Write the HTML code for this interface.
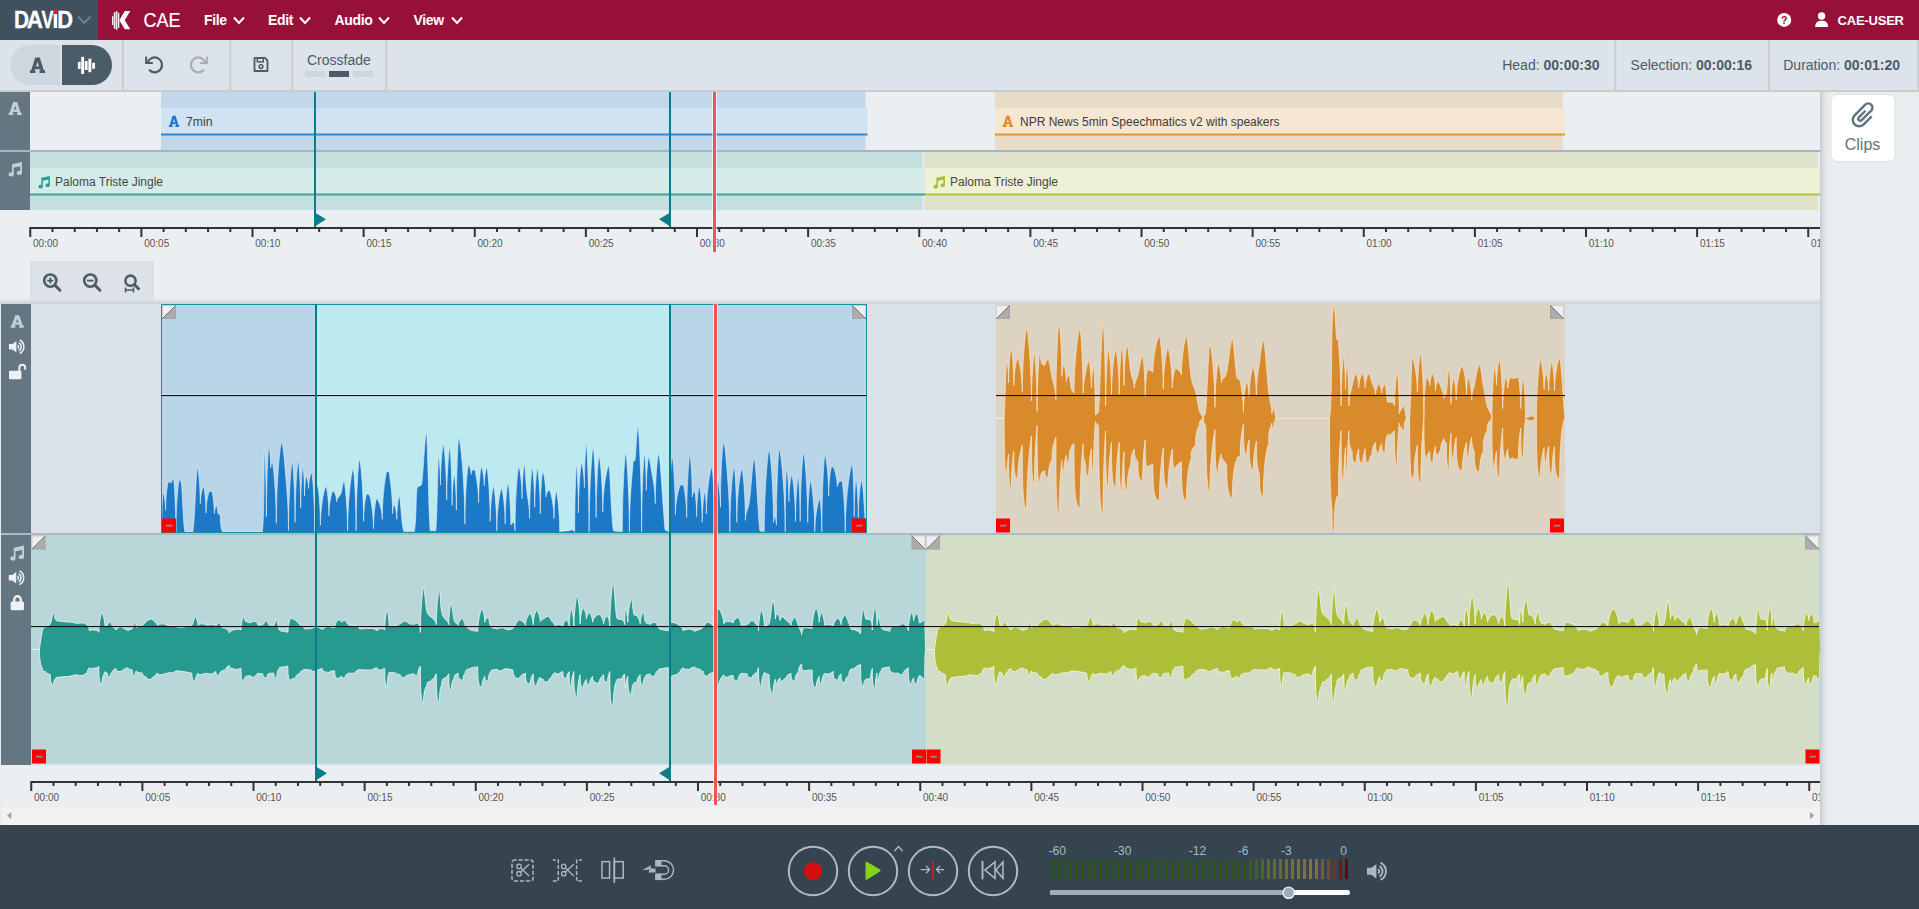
<!DOCTYPE html>
<html><head><meta charset="utf-8"><title>DAVID CAE</title>
<style>
html,body{margin:0;padding:0;width:1919px;height:909px;overflow:hidden;background:#eceff2;font-family:"Liberation Sans", sans-serif;}
#app{position:relative;width:1919px;height:909px;}
svg{display:block}
</style></head><body>
<div id="app"><div class="overview" style="position:absolute;left:0px;top:92px;width:1820px;height:212px;overflow:hidden"><svg width="1820" height="212" viewBox="0 92 1820 212"><rect x="0" y="92" width="1820" height="212" fill="#eceff2"/><rect x="0" y="92" width="30" height="118" fill="#647682"/><rect x="0" y="150" width="1820" height="2" fill="#a3b5c2"/><rect x="161" y="92" width="704.5" height="58" fill="#c2d7ea"/><rect x="161" y="108" width="706.5" height="26" fill="#d1e3f2"/><rect x="161" y="133.5" width="706.5" height="2" fill="#2f86d6"/><rect x="995" y="92" width="568" height="58" fill="#e8dcc8"/><rect x="995" y="108" width="570" height="26" fill="#f6e7d3"/><rect x="995" y="133.5" width="570" height="2" fill="#e0963a"/><rect x="30" y="152" width="892.5" height="58" fill="#c4dfde"/><rect x="30" y="168" width="892.5" height="26" fill="#d5ebe8"/><rect x="30" y="193.5" width="892.5" height="2" fill="#3ba59b"/><rect x="924.5" y="152" width="893.5" height="58" fill="#dfe3cb"/><rect x="924.5" y="168" width="895.5" height="26" fill="#eef1d6"/><rect x="924.5" y="193.5" width="895.5" height="2" fill="#b3c53e"/><rect x="922.5" y="152" width="2" height="58" fill="#e2e8ea"/><rect x="922" y="193.5" width="3" height="2" fill="#3ba59b"/><path transform="translate(8.6,102) scale(13.1,13)" d="M0.35,0 H0.65 L0.92,0.82 H1 V1 H0.64 V0.82 H0.71 L0.685,0.76 H0.315 L0.29,0.82 H0.36 V1 H0 V0.82 H0.08 Z M0.40,0.57 H0.60 L0.5,0.28 Z" fill="#c4ced5" fill-rule="evenodd"/><g transform="translate(8,162) scale(1.0)" fill="#c4ced5"><path d="M4,2.2 L14,0 V11 A2.6,2.1 0 1 1 12.2,9 V4.2 L5.8,5.6 V12.5 A2.6,2.1 0 1 1 4,10.5 Z"/></g><path transform="translate(168.9,115.8) scale(10.3,11.2)" d="M0.35,0 H0.65 L0.92,0.82 H1 V1 H0.64 V0.82 H0.71 L0.685,0.76 H0.315 L0.29,0.82 H0.36 V1 H0 V0.82 H0.08 Z M0.40,0.57 H0.60 L0.5,0.28 Z" fill="#1f7acb" fill-rule="evenodd"/><text x="186" y="125.9" font-family='"Liberation Sans", sans-serif' font-size="12.2" fill="#3c3c3c" font-weight="400" text-anchor="start" letter-spacing="0" >7min</text><path transform="translate(1002.7,115.8) scale(10.3,11.2)" d="M0.35,0 H0.65 L0.92,0.82 H1 V1 H0.64 V0.82 H0.71 L0.685,0.76 H0.315 L0.29,0.82 H0.36 V1 H0 V0.82 H0.08 Z M0.40,0.57 H0.60 L0.5,0.28 Z" fill="#e08c2c" fill-rule="evenodd"/><text x="1020" y="125.9" font-family='"Liberation Sans", sans-serif' font-size="12" fill="#3c3c3c" font-weight="400" text-anchor="start" letter-spacing="0" >NPR News 5min Speechmatics v2 with speakers</text><g transform="translate(38,176) scale(0.85)" fill="#2a9d92"><path d="M4,2.2 L14,0 V11 A2.6,2.1 0 1 1 12.2,9 V4.2 L5.8,5.6 V12.5 A2.6,2.1 0 1 1 4,10.5 Z"/></g><text x="55" y="186" font-family='"Liberation Sans", sans-serif' font-size="12" fill="#474747" font-weight="400" text-anchor="start" letter-spacing="0" >Paloma Triste Jingle</text><g transform="translate(933,176) scale(0.85)" fill="#a9bd2e"><path d="M4,2.2 L14,0 V11 A2.6,2.1 0 1 1 12.2,9 V4.2 L5.8,5.6 V12.5 A2.6,2.1 0 1 1 4,10.5 Z"/></g><text x="950" y="186" font-family='"Liberation Sans", sans-serif' font-size="12" fill="#474747" font-weight="400" text-anchor="start" letter-spacing="0" >Paloma Triste Jingle</text><rect x="30" y="227" width="1790" height="2" fill="#333"/><rect x="29.25" y="227" width="2" height="10" fill="#333"/><text x="33.05" y="247" font-family='"Liberation Sans", sans-serif' font-size="10" fill="#555" font-weight="400" text-anchor="start" letter-spacing="0" >00:00</text><rect x="51.48" y="227" width="2" height="5" fill="#333"/><rect x="73.70" y="227" width="2" height="5" fill="#333"/><rect x="95.93" y="227" width="2" height="5" fill="#333"/><rect x="118.15" y="227" width="2" height="5" fill="#333"/><rect x="140.38" y="227" width="2" height="10" fill="#333"/><text x="144.18" y="247" font-family='"Liberation Sans", sans-serif' font-size="10" fill="#555" font-weight="400" text-anchor="start" letter-spacing="0" >00:05</text><rect x="162.60" y="227" width="2" height="5" fill="#333"/><rect x="184.83" y="227" width="2" height="5" fill="#333"/><rect x="207.05" y="227" width="2" height="5" fill="#333"/><rect x="229.28" y="227" width="2" height="5" fill="#333"/><rect x="251.50" y="227" width="2" height="10" fill="#333"/><text x="255.3" y="247" font-family='"Liberation Sans", sans-serif' font-size="10" fill="#555" font-weight="400" text-anchor="start" letter-spacing="0" >00:10</text><rect x="273.73" y="227" width="2" height="5" fill="#333"/><rect x="295.95" y="227" width="2" height="5" fill="#333"/><rect x="318.18" y="227" width="2" height="5" fill="#333"/><rect x="340.40" y="227" width="2" height="5" fill="#333"/><rect x="362.62" y="227" width="2" height="10" fill="#333"/><text x="366.43" y="247" font-family='"Liberation Sans", sans-serif' font-size="10" fill="#555" font-weight="400" text-anchor="start" letter-spacing="0" >00:15</text><rect x="384.85" y="227" width="2" height="5" fill="#333"/><rect x="407.08" y="227" width="2" height="5" fill="#333"/><rect x="429.30" y="227" width="2" height="5" fill="#333"/><rect x="451.53" y="227" width="2" height="5" fill="#333"/><rect x="473.75" y="227" width="2" height="10" fill="#333"/><text x="477.55" y="247" font-family='"Liberation Sans", sans-serif' font-size="10" fill="#555" font-weight="400" text-anchor="start" letter-spacing="0" >00:20</text><rect x="495.98" y="227" width="2" height="5" fill="#333"/><rect x="518.20" y="227" width="2" height="5" fill="#333"/><rect x="540.42" y="227" width="2" height="5" fill="#333"/><rect x="562.65" y="227" width="2" height="5" fill="#333"/><rect x="584.88" y="227" width="2" height="10" fill="#333"/><text x="588.67" y="247" font-family='"Liberation Sans", sans-serif' font-size="10" fill="#555" font-weight="400" text-anchor="start" letter-spacing="0" >00:25</text><rect x="607.10" y="227" width="2" height="5" fill="#333"/><rect x="629.33" y="227" width="2" height="5" fill="#333"/><rect x="651.55" y="227" width="2" height="5" fill="#333"/><rect x="673.78" y="227" width="2" height="5" fill="#333"/><rect x="696.00" y="227" width="2" height="10" fill="#333"/><text x="699.8" y="247" font-family='"Liberation Sans", sans-serif' font-size="10" fill="#555" font-weight="400" text-anchor="start" letter-spacing="0" >00:30</text><rect x="718.23" y="227" width="2" height="5" fill="#333"/><rect x="740.45" y="227" width="2" height="5" fill="#333"/><rect x="762.68" y="227" width="2" height="5" fill="#333"/><rect x="784.90" y="227" width="2" height="5" fill="#333"/><rect x="807.12" y="227" width="2" height="10" fill="#333"/><text x="810.92" y="247" font-family='"Liberation Sans", sans-serif' font-size="10" fill="#555" font-weight="400" text-anchor="start" letter-spacing="0" >00:35</text><rect x="829.35" y="227" width="2" height="5" fill="#333"/><rect x="851.58" y="227" width="2" height="5" fill="#333"/><rect x="873.80" y="227" width="2" height="5" fill="#333"/><rect x="896.03" y="227" width="2" height="5" fill="#333"/><rect x="918.25" y="227" width="2" height="10" fill="#333"/><text x="922.05" y="247" font-family='"Liberation Sans", sans-serif' font-size="10" fill="#555" font-weight="400" text-anchor="start" letter-spacing="0" >00:40</text><rect x="940.48" y="227" width="2" height="5" fill="#333"/><rect x="962.70" y="227" width="2" height="5" fill="#333"/><rect x="984.93" y="227" width="2" height="5" fill="#333"/><rect x="1007.15" y="227" width="2" height="5" fill="#333"/><rect x="1029.38" y="227" width="2" height="10" fill="#333"/><text x="1033.17" y="247" font-family='"Liberation Sans", sans-serif' font-size="10" fill="#555" font-weight="400" text-anchor="start" letter-spacing="0" >00:45</text><rect x="1051.60" y="227" width="2" height="5" fill="#333"/><rect x="1073.83" y="227" width="2" height="5" fill="#333"/><rect x="1096.05" y="227" width="2" height="5" fill="#333"/><rect x="1118.28" y="227" width="2" height="5" fill="#333"/><rect x="1140.50" y="227" width="2" height="10" fill="#333"/><text x="1144.3" y="247" font-family='"Liberation Sans", sans-serif' font-size="10" fill="#555" font-weight="400" text-anchor="start" letter-spacing="0" >00:50</text><rect x="1162.73" y="227" width="2" height="5" fill="#333"/><rect x="1184.95" y="227" width="2" height="5" fill="#333"/><rect x="1207.18" y="227" width="2" height="5" fill="#333"/><rect x="1229.40" y="227" width="2" height="5" fill="#333"/><rect x="1251.62" y="227" width="2" height="10" fill="#333"/><text x="1255.42" y="247" font-family='"Liberation Sans", sans-serif' font-size="10" fill="#555" font-weight="400" text-anchor="start" letter-spacing="0" >00:55</text><rect x="1273.85" y="227" width="2" height="5" fill="#333"/><rect x="1296.08" y="227" width="2" height="5" fill="#333"/><rect x="1318.30" y="227" width="2" height="5" fill="#333"/><rect x="1340.53" y="227" width="2" height="5" fill="#333"/><rect x="1362.75" y="227" width="2" height="10" fill="#333"/><text x="1366.55" y="247" font-family='"Liberation Sans", sans-serif' font-size="10" fill="#555" font-weight="400" text-anchor="start" letter-spacing="0" >01:00</text><rect x="1384.98" y="227" width="2" height="5" fill="#333"/><rect x="1407.20" y="227" width="2" height="5" fill="#333"/><rect x="1429.43" y="227" width="2" height="5" fill="#333"/><rect x="1451.65" y="227" width="2" height="5" fill="#333"/><rect x="1473.88" y="227" width="2" height="10" fill="#333"/><text x="1477.67" y="247" font-family='"Liberation Sans", sans-serif' font-size="10" fill="#555" font-weight="400" text-anchor="start" letter-spacing="0" >01:05</text><rect x="1496.10" y="227" width="2" height="5" fill="#333"/><rect x="1518.33" y="227" width="2" height="5" fill="#333"/><rect x="1540.55" y="227" width="2" height="5" fill="#333"/><rect x="1562.78" y="227" width="2" height="5" fill="#333"/><rect x="1585.00" y="227" width="2" height="10" fill="#333"/><text x="1588.8" y="247" font-family='"Liberation Sans", sans-serif' font-size="10" fill="#555" font-weight="400" text-anchor="start" letter-spacing="0" >01:10</text><rect x="1607.23" y="227" width="2" height="5" fill="#333"/><rect x="1629.45" y="227" width="2" height="5" fill="#333"/><rect x="1651.68" y="227" width="2" height="5" fill="#333"/><rect x="1673.90" y="227" width="2" height="5" fill="#333"/><rect x="1696.12" y="227" width="2" height="10" fill="#333"/><text x="1699.92" y="247" font-family='"Liberation Sans", sans-serif' font-size="10" fill="#555" font-weight="400" text-anchor="start" letter-spacing="0" >01:15</text><rect x="1718.35" y="227" width="2" height="5" fill="#333"/><rect x="1740.58" y="227" width="2" height="5" fill="#333"/><rect x="1762.80" y="227" width="2" height="5" fill="#333"/><rect x="1785.03" y="227" width="2" height="5" fill="#333"/><rect x="1807.25" y="227" width="2" height="10" fill="#333"/><text x="1811.05" y="247" font-family='"Liberation Sans", sans-serif' font-size="10" fill="#555" font-weight="400" text-anchor="start" letter-spacing="0" >01:20</text><rect x="314" y="92" width="2" height="135" fill="#0b7d8a"/><polygon points="314,212 326,219.3 314,227" fill="#0b7d8a"/><rect x="669" y="92" width="2" height="135" fill="#0b7d8a"/><polygon points="671,212 659,219.3 671,227" fill="#0b7d8a"/><rect x="712" y="92" width="5" height="160" fill="rgba(255,255,255,0.62)"/><rect x="713" y="92" width="3" height="160" fill="#f05454"/><rect x="31" y="262" width="122" height="42" fill="#dce2e8" stroke="#d3d9df" stroke-width="1"/><circle cx="50.3" cy="280.6" r="6.1" fill="none" stroke="#4b5c69" stroke-width="2.6"/><line x1="54.875" y1="285.175" x2="59.937999999999995" y2="290.238" stroke="#4b5c69" stroke-width="3" stroke-linecap="round"/><path d="M47.3,280.6 H53.3 M50.3,277.6 V283.6" stroke="#4b5c69" stroke-width="1.8"/><circle cx="90.3" cy="280.6" r="6.1" fill="none" stroke="#4b5c69" stroke-width="2.6"/><line x1="94.875" y1="285.175" x2="99.938" y2="290.238" stroke="#4b5c69" stroke-width="3" stroke-linecap="round"/><path d="M87.0,280.6 H93.6" stroke="#4b5c69" stroke-width="1.8"/><circle cx="130.5" cy="280.7" r="5.1" fill="none" stroke="#4b5c69" stroke-width="2.6"/><line x1="134.325" y1="284.525" x2="138.558" y2="288.758" stroke="#4b5c69" stroke-width="3" stroke-linecap="round"/><path d="M125.5,287.5 V292.5 M125.5,290 H133.5 M133.5,287.5 V292.5" stroke="#4b5c69" stroke-width="1.6" fill="none"/><defs><linearGradient id="shT" x1="0" y1="0" x2="0" y2="1"><stop offset="0" stop-color="#eceff2" stop-opacity="0"/><stop offset="1" stop-color="#c9d0d6"/></linearGradient></defs><rect x="0" y="295" width="1820" height="9" fill="url(#shT)"/></svg></div><div class="tracks" style="position:absolute;left:0px;top:304px;width:1820px;height:521px;overflow:hidden"><svg width="1820" height="521" viewBox="0 304 1820 521"><rect x="0" y="304" width="1820" height="521" fill="#eceff2"/><rect x="31" y="304" width="1789" height="229" fill="#dae1e9"/><rect x="0" y="533" width="1820" height="2" fill="#a8bbc7"/><rect x="31" y="535" width="1789" height="229" fill="#b9d7d9"/><rect x="31" y="764" width="1789" height="1.5" fill="#dce2e7"/><rect x="1" y="304" width="30" height="229" fill="#647682"/><rect x="1" y="535" width="30" height="230" fill="#647682"/><rect x="161" y="304" width="706" height="229" fill="#b8d6e8"/><rect x="317" y="305" width="352" height="228" fill="#bdeaf0"/><defs><clipPath id="cpA"><rect x="161" y="304" width="706" height="228.3"/></clipPath><clipPath id="cpN"><rect x="996" y="304" width="569" height="229"/></clipPath><clipPath id="cpM"><rect x="31" y="535" width="1788" height="229"/></clipPath></defs><path clip-path="url(#cpA)" d="M161.5,533 L161.5,532 C161.7,525.4 162.4,492.2 162.8,492.2 C163.7,492.2 165.6,502 165.6,510.1 C165.6,497.4 167.6,481.9 168.4,481.9 C169.3,481.9 171.3,482.4 171.3,482.9 C171.3,481.2 172.8,479.1 173.5,479.1 C174.2,479.1 175.9,508.2 175.9,532 C175.9,508.6 178.3,480 179.3,480 C180,480 180.6,480 181.6,484.7 C182.5,493.4 183.1,524.1 185,532 C186.8,532 190.7,532 192.8,532 C194.9,521.3 196.1,467.8 197.5,467.8 C198.4,467.8 200.3,487.4 200.3,503.5 C200.3,495.9 202.6,486.6 203.5,486.6 C204.3,486.6 206,501.1 206,512.9 C206,503.6 207.8,495.8 208.8,492.2 C209.7,491.3 210.8,491.3 211.6,491.3 C212.4,491.3 214.4,503.7 214.4,513.8 C214.4,510 216,505.4 216.7,505.4 C217.1,505.4 217.6,512.2 218.2,513.8 C218.7,514.7 219.3,513.8 220,514.7 C220.8,517.8 220,529.1 222.9,532 C229.9,532 255.3,532 262.3,532 C264.5,518.3 263.8,450 264.5,450 C265.1,450 266.4,486.7 266.4,516.6 C266.4,485 268.1,446.3 268.8,446.3 C269.4,446.3 270.7,458.1 270.7,467.8 C270.7,465.3 271.7,462.2 272.2,462.2 C273.4,462.2 276.3,495.8 276.3,523.2 C276.3,486.9 280,442.5 281.6,442.5 C282.5,442.5 283.6,450.3 284.8,465 C285.9,479.7 288.5,501.1 288.5,530.7 C288.5,499.5 291.1,461.3 292.3,461.3 C293.1,461.3 295.1,494.8 295.1,522.3 C295.1,494.4 297.3,460.3 298.3,460.3 C299,460.3 300.7,486.7 300.7,508.2 C300.7,489.2 302.3,466 303,466 C303.4,466 304.5,482.5 304.5,496 C304.5,487.1 305.8,476.3 306.3,476.3 C307,476.3 308.6,483 308.6,488.5 C308.6,481.3 310.7,472.5 311.6,472.5 C312.6,472.5 314.8,505.2 314.8,532 C314.8,510.7 316.8,484.7 317.6,484.7 C318.4,484.7 320.4,506.9 320.4,525.1 C320.4,507.8 324.4,486.6 326,486.6 C326.9,486.6 328.9,502.6 328.9,515.7 C328.9,506.8 330.3,500.1 331.1,496 C331.9,491.9 332.8,491.3 333.5,491.3 C334.5,491.3 336.7,497 336.7,501.6 C336.7,497.8 339.9,496.6 341.1,493.2 C342.2,489.7 343,481 343.9,481 C345,481 347.6,508.3 347.6,530.7 C347.6,502.8 351.6,468.8 353.2,468.8 C354.1,468.8 356.1,502.8 356.1,530.7 C356.1,498.6 358.4,459.4 359.4,459.4 C360.7,459.4 363.6,493.5 363.6,521.3 C363.6,509.1 365.8,494.1 366.8,494.1 C367.8,494.1 369,494.1 370.1,496.9 C371.3,502.7 373.5,514.5 373.5,528.8 C373.5,515.3 375.7,498.8 376.7,498.8 C378.4,498.8 382.3,510.2 382.3,519.4 C382.3,497.9 385.6,471.6 387,471.6 C387.7,471.6 388.3,471.6 389.3,472.5 C390.2,479.6 392.6,495.2 392.6,513.8 C392.6,509.6 393.7,504.4 394.1,504.4 C394.9,504.4 396.8,512.7 396.8,519.4 C396.8,508.9 398.5,496 399.2,496 C400.6,496 401.4,525.7 403.9,531.6 C406.4,531.6 412,531.6 414.2,531.6 C416.4,524.4 415.8,496.5 417,488.5 C418.3,483.8 420.2,488.5 421.7,483.8 C423.3,474.4 425,432.2 426.4,432.2 C427.5,432.2 428.6,514.3 430.2,530.7 C431.7,530.7 434.4,530.7 435.8,530.7 C437.2,518.3 437.8,456.6 438.6,456.6 C439.2,456.6 440.5,472.1 440.5,484.7 C440.5,466.6 442.5,444.4 443.3,444.4 C444.3,444.4 446.7,474.8 446.7,499.7 C446.7,476.5 448.9,448.1 449.9,448.1 C450.5,448.1 452.1,479.6 452.1,505.4 C452.1,491.4 453.6,474.4 454.2,474.4 C454.9,474.4 456.4,494 456.4,510.1 C456.4,477.6 458,437.8 458.7,437.8 C460.5,437.8 464.9,485.3 464.9,524.1 C464.9,497.5 467.5,465 468.6,465 C469.4,465 471.1,470.2 471.1,474.4 C471.1,472.3 472.4,469.7 472.9,469.7 C473.6,469.7 474.3,469.7 475.2,470.7 C476.1,476.1 478.6,488.2 478.6,502.6 C478.6,486.5 480.5,466.9 481.4,466.9 C482.2,466.9 484.2,477.2 484.2,485.7 C484.2,477.6 486,467.8 486.8,467.8 C487.8,467.8 490.2,497.3 490.2,521.3 C490.2,505.7 492.6,486.6 493.6,486.6 C494.5,486.6 496.8,510.9 496.8,530.7 C496.8,511.7 500.1,488.5 501.5,488.5 C502.6,488.5 505.2,508.1 505.2,524.1 C505.2,505.6 507.2,482.9 508,482.9 C508.9,482.9 510.8,506.1 510.8,525.1 C510.8,523.8 512.8,522.3 513.7,522.3 C514.1,522.3 515,526.9 515,530.7 C515,502 517.6,466.9 518.8,466.9 C519.8,466.9 522.1,484.4 522.1,498.8 C522.1,483.6 523.7,465 524.4,465 C525.1,465 525.8,480.5 526.6,489.4 C527.5,498.3 529.6,505.4 529.6,518.5 C529.6,495.7 531.5,467.8 532.3,467.8 C533,467.8 534.7,489.5 534.7,507.2 C534.7,489.9 536.7,468.8 537.5,468.8 C538.4,468.8 540.3,493.5 540.3,513.8 C540.3,494.8 542,471.6 542.8,471.6 C543.7,471.6 546,485.5 546,496.9 C546,494 547.9,490.4 548.8,490.4 C549.4,490.4 550.1,490.4 551,494.1 C551.9,498.8 554,507.5 554,518.5 C554,506.3 555.6,491.3 556.3,491.3 C557.3,491.3 559.7,513.5 559.7,531.6 C559.7,531.2 567.5,531 569.4,530.7 C570.9,530.4 570.5,529.8 570.9,529.8 C572,529.8 574.7,530.8 574.7,531.6 C574.7,501.7 576,465 576.5,465 C577.1,465 578.4,491.3 578.4,512.9 C578.4,490.5 580.6,463.2 581.6,463.2 C582.4,463.2 584.4,476.6 584.4,487.5 C584.4,467.7 585.7,443.5 586.3,443.5 C587.1,443.5 589.1,492 589.1,531.6 C589.1,493.6 592,447.2 593.2,447.2 C594.1,447.2 596.1,485.9 596.1,517.6 C596.1,490.1 598.2,456.6 599.1,456.6 C600.2,456.6 602.8,487 602.8,511.9 C602.8,491.2 607,466 608.8,466 C610.2,466 611.2,519.7 613.5,530.7 C615.8,531.6 622.3,531.2 622.3,531.6 C622.3,496.2 624.7,452.8 625.7,452.8 C626.8,452.8 629.4,496.2 629.4,531.6 C629.4,500 632.3,473.2 633.2,461.3 C634.1,460.3 634.3,461.3 635.1,460.3 C635.9,454.6 637,426.6 637.9,426.6 C639,426.6 641.6,484.4 641.6,531.6 C641.6,496.6 643.6,453.8 644.5,453.8 C645,453.8 646.3,473.9 646.3,490.4 C646.3,475.6 647.9,457.5 648.6,457.5 C649.3,457.5 649.9,460.2 651,467.8 C652.1,475.5 655.3,487.4 655.3,503.5 C655.3,481.1 657.6,453.8 658.5,453.8 C660.5,453.8 663.4,516.8 665.1,529.8 C666.8,531.6 668.8,530.8 668.8,531.6 C668.8,497.9 671.2,456.6 672.2,456.6 C673.2,456.6 675.4,488.6 675.4,514.7 C675.4,501.2 679.4,484.7 681,484.7 C681.9,484.7 682.9,484.7 683.9,486.6 C684.8,492.1 686.7,503.6 686.7,517.6 C686.7,489.3 688.9,454.7 689.9,454.7 C690.6,454.7 692.3,477.9 692.3,496.9 C692.3,494.4 694,491.3 694.7,491.3 C695.3,491.3 696.6,505.2 696.6,516.6 C696.6,502.7 698.5,485.7 699.2,485.7 C700.1,485.7 702.2,505.8 702.2,522.3 C702.2,508.3 704.1,491.3 704.9,491.3 C705.3,491.3 706.4,503.7 706.4,513.8 C706.4,492.7 710.3,466.9 712,466.9 C712.8,466.9 714.8,502.5 714.8,531.6 C714.8,508.4 716.8,480 717.6,480 C718.5,480 720.4,495 720.4,507.2 C720.4,478.5 722.4,443.5 723.3,443.5 C723.9,443.5 724.4,443.5 725.5,451.9 C726.6,466.6 729.8,495.8 729.8,531.6 C729.8,502.5 732.8,466.9 734.1,466.9 C734.9,466.9 736.8,497.3 736.8,522.3 C736.8,498.2 740.4,468.8 742,468.8 C743,468.8 745.4,497.2 745.4,520.4 C745.4,511.5 748.1,511 749.5,500.7 C751,490.4 752.8,458.5 754.2,458.5 C755.9,458.5 758.2,518.5 759.8,530.7 C761.5,531.6 764.2,531.2 764.2,531.6 C764.2,494.9 767.7,450 769.2,450 C770.5,450 773.5,489.7 773.5,522.3 C773.5,519.7 774.5,516.6 774.8,516.6 C775.3,516.6 776.4,521.3 776.4,525.1 C776.4,490.9 778.3,449.1 779.2,449.1 C781,449.1 785.2,494.5 785.2,531.6 C785.2,502.9 786.1,467.8 786.5,467.8 C787.2,467.8 788.9,486.4 788.9,501.6 C788.9,489.8 790.9,475.3 791.7,475.3 C792.9,475.3 795.5,500.6 795.5,521.3 C795.5,501.1 797.5,476.3 798.3,476.3 C798.9,476.3 800.2,501.1 800.2,521.3 C800.2,490.5 802.5,452.8 803.6,452.8 C804.8,452.8 807.7,491 807.7,522.3 C807.7,503.7 809.7,481 810.5,481 C811.8,481 814.8,508.8 814.8,531.6 C814.8,516.9 818.4,498.8 819.9,498.8 C820.4,498.8 821.8,516.9 821.8,531.6 C821.8,497 824,454.7 824.9,454.7 C826.1,454.7 828.7,477.4 828.7,496 C828.7,482.9 830.8,466.9 831.7,466.9 C832.4,466.9 833,466.9 833.9,467.8 C834.9,471.1 837.3,478.2 837.3,486.6 C837.3,484.5 838.5,482.9 839.2,481.9 C840,481 841,481 841.8,481 C842.8,481 845.2,508.8 845.2,531.6 C845.2,501.2 850.2,464.1 852.3,464.1 C852.9,464.1 854.2,493 854.2,516.6 C854.2,499.7 855.5,479.1 856.1,479.1 C856.8,479.1 858.3,500.3 858.3,517.6 C858.3,500.7 860.7,480 861.7,480 C863,480 865.2,523 865.8,531.6 L865.8,533 Z" fill="#1c79c8" stroke="#e6f2f8" stroke-width="0.7" stroke-opacity="0.85"/><rect x="161.5" y="304.5" width="705" height="228" fill="none" stroke="#1592a0" stroke-width="1"/><rect x="996" y="304" width="569" height="229" fill="#ddd3c2"/><rect x="996" y="418" width="569" height="1" fill="#f6f1ea"/><path clip-path="url(#cpN)" d="M1004.2,418.4 C1004.7,408.6 1006,359.5 1006.8,359.5 C1007.4,359.5 1008.6,372.3 1008.6,382.8 C1008.6,367 1010.4,347.8 1011.2,347.8 C1012,347.8 1013.8,368.5 1013.8,385.3 C1013.8,373.1 1016.5,358.2 1017.7,358.2 C1019.1,358.2 1022.3,376.7 1022.3,391.8 C1022.3,363.1 1025.4,327.9 1026.7,327.9 C1028.1,327.9 1031.4,368 1031.4,400.9 C1031.4,379.3 1033.5,353 1034.5,353 C1035.3,353 1037.1,385 1037.1,411.2 C1037.1,385 1038.9,353 1039.7,353 C1040.3,353 1040.9,361.2 1041.7,363.4 C1042.6,365.5 1044.8,364.8 1044.8,365.9 C1044.8,363 1047.2,359.5 1048.2,359.5 C1049.3,359.5 1050.8,370.9 1052.1,377.6 C1053.4,384.3 1055.9,389.7 1055.9,399.6 C1055.9,364.6 1058.1,322 1059,322 C1059.9,322 1061.9,351.8 1061.9,376.3 C1061.9,371 1063.2,364.6 1063.7,364.6 C1064.5,364.6 1066.3,373.9 1066.3,381.5 C1066.3,378.5 1068.1,375 1068.9,375 C1069.6,375 1070.6,386.2 1071.5,389.2 C1072.3,392.2 1074,391.3 1074,393.1 C1074,364 1078.2,328.4 1080,328.4 C1080.9,328.4 1083.1,364 1083.1,393.1 C1083.1,383.8 1084.7,377.8 1085.7,372.4 C1086.6,367 1087.9,360.8 1088.8,360.8 C1089.6,360.8 1091.4,375.7 1091.4,387.9 C1091.4,378 1092.8,365.9 1093.4,365.9 C1094.1,365.9 1095.5,393 1095.5,415.1 C1095.5,413.3 1097.4,415.1 1098.6,411.2 C1099.9,395.7 1101.7,322 1103,322 C1103.8,322 1105.6,368.2 1105.6,406 C1105.6,380.4 1107.6,349.1 1108.4,349.1 C1109.4,349.1 1111.5,374 1111.5,394.4 C1111.5,374 1114.6,349.1 1115.9,349.1 C1116.9,349.1 1119.3,374 1119.3,394.4 C1119.3,372.3 1121.1,345.3 1121.9,345.3 C1122.5,345.3 1124,367.3 1124,385.3 C1124,367.3 1126.1,345.3 1127.1,345.3 C1128.2,345.3 1129.7,365.3 1130.9,372.4 C1132.1,379.5 1134.3,380.9 1134.3,387.9 C1134.3,382.1 1136.5,380.4 1137.9,375 C1139.3,369.6 1141.2,355.6 1142.6,355.6 C1143.3,355.6 1145.2,378.4 1145.2,397 C1145.2,384.8 1147,369.8 1147.7,369.8 C1149.3,369.8 1152.9,371.2 1152.9,372.4 C1152.9,356.1 1157.4,336.2 1159.4,336.2 C1160.5,336.2 1163.3,365.4 1163.3,389.2 C1163.3,370.6 1166.5,347.8 1167.9,347.8 C1169.2,347.8 1172.3,369.9 1172.3,387.9 C1172.3,379.2 1174.7,368.5 1175.7,368.5 C1177.4,368.5 1181.4,372.1 1181.4,375 C1181.4,357.5 1185,336.2 1186.5,336.2 C1187.9,336.2 1189.7,368.3 1191.2,377.6 C1192.7,386.8 1194.2,386.2 1195.6,391.8 C1197,397.4 1198.2,406.7 1199.5,411.2 C1200.8,415.7 1203.3,415.5 1203.3,419 C1203.3,414.3 1204.9,419 1205.9,408.6 C1207,396.1 1208.6,344 1209.8,344 C1211.4,344 1215,378.8 1215,407.3 C1215,387.5 1217.2,363.4 1218.1,363.4 C1219.1,363.4 1221.4,374 1221.4,382.8 C1221.4,378.1 1224.8,379.7 1226.6,372.4 C1228.4,365.1 1230.6,338.8 1232.3,338.8 C1233.7,338.8 1235.6,370.5 1237,377.6 C1238.3,381.5 1239.2,377.6 1240.3,381.5 C1241.4,387.3 1243.4,398.5 1243.4,412.5 C1243.4,398.5 1245.8,381.5 1246.8,381.5 C1247.5,381.5 1249.1,390 1249.1,397 C1249.1,383.6 1252,367.2 1253.3,367.2 C1254.2,367.2 1256.4,382.9 1256.4,395.7 C1256.4,380.6 1258.3,371.3 1259.5,362.1 C1260.6,352.8 1262.2,340.1 1263.3,340.1 C1265,340.1 1267.3,380.8 1268.8,393.1 C1270.2,405.4 1271.9,404.5 1271.9,413.8 C1271.9,411.5 1273.3,408.6 1273.9,408.6 C1274.5,408.6 1275.5,416.8 1275.8,418.4 C1275.7,418.4 1275.7,418.4 1275.7,418.4 C1284.6,418.4 1320.1,418.4 1329.5,418.4 C1332.1,403 1331.3,344.7 1332.1,325.9 C1332.8,307.1 1333.5,305.7 1334.1,305.7 C1334.9,305.7 1336,332.8 1336.7,338.8 C1337.5,341.4 1337.8,338.8 1338.5,341.4 C1339.3,352.6 1341.1,376.9 1341.1,406 C1341.1,383.3 1342.9,355.6 1343.7,355.6 C1344.2,355.6 1345.5,374.1 1345.5,389.2 C1345.5,377.6 1346.6,363.4 1347.1,363.4 C1347.6,363.4 1348.9,386.8 1348.9,406 C1348.9,396.7 1351,390.7 1352.2,385.3 C1353.4,380 1354.9,373.7 1356.1,373.7 C1356.9,373.7 1358.7,381.5 1358.7,387.9 C1358.7,381.5 1361.4,373.7 1362.6,373.7 C1363.4,373.7 1365.2,381.5 1365.2,387.9 C1365.2,381.5 1367.7,373.7 1368.8,373.7 C1369.8,373.7 1371,379.3 1372.1,382.8 C1373.3,386.2 1375.5,389.2 1375.5,394.4 C1375.5,389.7 1378,384 1379.1,384 C1379.9,384 1381.7,389 1381.7,393.1 C1381.7,389 1384.1,384 1385.1,384 C1385.9,384 1386.6,399.1 1387.7,402.1 C1388.7,402.1 1390.4,402.1 1391.5,402.1 C1392.7,402.8 1394.6,404.3 1394.6,406 C1394.6,390.3 1396.5,371.1 1397.2,371.1 C1397.9,371.1 1399.3,394.6 1399.3,413.8 C1399.3,411.5 1401.1,409.9 1401.9,408.6 C1402.7,407.3 1403.3,406 1404,406 C1404.7,406 1405.6,416.4 1406.5,418.4 C1407.5,418.4 1408.7,418.4 1409.6,418.4 C1410.6,408.2 1411.5,356.9 1412.2,356.9 C1412.8,356.9 1413.4,357.5 1414.3,363.4 C1415.2,369.2 1417.4,379 1417.4,391.8 C1417.4,374.3 1419.8,353 1420.8,353 C1421.7,353 1423.9,389 1423.9,418.4 C1423.9,400.1 1425.7,377.6 1426.5,377.6 C1427.5,377.6 1429.8,381.8 1429.8,385.3 C1429.8,380.1 1432,373.7 1432.9,373.7 C1433.7,373.7 1435.5,382.9 1435.5,390.5 C1435.5,386.4 1437.3,381.5 1438.1,381.5 C1438.9,381.5 1439.7,383.8 1440.7,386.6 C1441.6,389.4 1443.8,393 1443.8,398.3 C1443.8,395.9 1445.5,398.3 1446.4,393.1 C1447.2,387.9 1448.2,367.2 1449,367.2 C1449.6,367.2 1451,387.1 1451,403.4 C1451,391.8 1452.8,377.6 1453.6,377.6 C1454.4,377.6 1456.2,389.7 1456.2,399.6 C1456.2,384.4 1460.4,365.9 1462.1,365.9 C1463.5,365.9 1466.5,381.6 1466.5,394.4 C1466.5,386.8 1468,377.6 1468.6,377.6 C1469.5,377.6 1471.7,389.7 1471.7,399.6 C1471.7,393.2 1473,391.2 1474.3,385.3 C1475.6,379.5 1477.9,364.6 1479.5,364.6 C1480.6,364.6 1482.1,378.4 1483.3,385.3 C1484.6,392.2 1485.8,400.5 1487.2,406 C1488.6,411.5 1491.9,412.9 1491.9,418.4 C1491.9,395.4 1493.7,367.2 1494.5,367.2 C1495.1,367.2 1496.5,377.2 1496.5,385.3 C1496.5,373.7 1498.7,359.5 1499.6,359.5 C1500.6,359.5 1502.7,386.5 1502.7,408.6 C1502.7,394.6 1504.9,377.6 1505.8,377.6 C1506.5,377.6 1507.9,383.3 1507.9,387.9 C1507.9,383.3 1509.7,377.6 1510.5,377.6 C1511.3,377.6 1513.1,378.3 1513.1,378.9 C1513.1,378.3 1516.7,377.6 1518.3,377.6 C1519,377.6 1520.8,394.6 1520.8,408.6 C1520.8,394.6 1522.7,377.6 1523.4,377.6 C1524,377.6 1525.5,400.1 1525.5,418.4 C1525.5,417.7 1527.7,417.3 1528.6,416.9 C1529.5,416.5 1530.4,415.9 1531.2,415.9 C1532,415.9 1532.9,416.5 1533.8,416.9 C1534.6,417.3 1536.4,417.7 1536.4,418.4 C1536.4,391.9 1539.1,359.5 1540.2,359.5 C1541.4,359.5 1544.1,375.8 1544.1,389.2 C1544.1,382.2 1545.6,373.7 1546.2,373.7 C1547,373.7 1548.8,382.9 1548.8,390.5 C1548.8,377.7 1550.9,362.1 1551.9,362.1 C1552.6,362.1 1554.5,377.7 1554.5,390.5 C1554.5,376 1558.1,358.2 1559.6,358.2 C1561.2,358.2 1563.9,408.4 1564.8,418.4 L1564.8,418.4 C1559.6,428.4 1559.6,478.6 1559.6,478.6 C1554.5,478.6 1554.5,460.8 1554.5,446.3 C1551.9,459.1 1551.9,474.7 1551.9,474.7 C1548.8,474.7 1548.8,459.1 1548.8,446.3 C1546.2,453.9 1546.2,463.1 1546.2,463.1 C1544.1,463.1 1544.1,454.6 1544.1,447.6 C1540.2,461 1540.2,477.3 1540.2,477.3 C1536.4,477.3 1536.4,444.9 1536.4,418.4 C1533.8,419.1 1533.8,419.5 1533.8,419.9 C1531.2,420.3 1531.2,420.9 1531.2,420.9 C1528.6,420.9 1528.6,420.3 1528.6,419.9 C1525.5,419.5 1525.5,419.1 1525.5,418.4 C1523.4,436.7 1523.4,459.2 1523.4,459.2 C1520.8,459.2 1520.8,442.2 1520.8,428.2 C1518.3,442.2 1518.3,459.2 1518.3,459.2 C1513.1,459.2 1513.1,458.5 1513.1,457.9 C1510.5,458.5 1510.5,459.2 1510.5,459.2 C1507.9,459.2 1507.9,453.5 1507.9,448.9 C1505.8,453.5 1505.8,459.2 1505.8,459.2 C1502.7,459.2 1502.7,442.2 1502.7,428.2 C1499.6,450.3 1499.6,477.3 1499.6,477.3 C1496.5,477.3 1496.5,463.1 1496.5,451.5 C1494.5,459.6 1494.5,469.6 1494.5,469.6 C1491.9,469.6 1491.9,441.4 1491.9,418.4 C1487.2,423.9 1487.2,425.3 1487.2,430.8 C1483.3,436.3 1483.3,444.6 1483.3,451.5 C1479.5,458.4 1479.5,472.2 1479.5,472.2 C1474.3,472.2 1474.3,457.3 1474.3,451.5 C1471.7,445.6 1471.7,443.6 1471.7,437.2 C1468.6,447.1 1468.6,459.2 1468.6,459.2 C1466.5,459.2 1466.5,450 1466.5,442.4 C1462.1,455.2 1462.1,470.9 1462.1,470.9 C1456.2,470.9 1456.2,452.4 1456.2,437.2 C1453.6,447.1 1453.6,459.2 1453.6,459.2 C1451,459.2 1451,445 1451,433.4 C1449,449.7 1449,469.6 1449,469.6 C1446.4,469.6 1446.4,448.9 1446.4,443.7 C1443.8,438.5 1443.8,440.9 1443.8,438.5 C1440.7,443.8 1440.7,447.4 1440.7,450.2 C1438.1,453 1438.1,455.3 1438.1,455.3 C1435.5,455.3 1435.5,450.4 1435.5,446.3 C1432.9,453.9 1432.9,463.1 1432.9,463.1 C1429.8,463.1 1429.8,456.7 1429.8,451.5 C1426.5,455 1426.5,459.2 1426.5,459.2 C1423.9,459.2 1423.9,436.7 1423.9,418.4 C1420.8,447.8 1420.8,483.8 1420.8,483.8 C1417.4,483.8 1417.4,462.5 1417.4,445 C1414.3,457.8 1414.3,467.6 1414.3,473.4 C1412.2,479.3 1412.2,479.9 1412.2,479.9 C1409.6,479.9 1409.6,428.6 1409.6,418.4 C1406.5,418.4 1406.5,418.4 1406.5,418.4 C1404,420.4 1404,430.8 1404,430.8 C1401.9,430.8 1401.9,429.5 1401.9,428.2 C1399.3,426.9 1399.3,425.3 1399.3,423 C1397.2,442.2 1397.2,465.7 1397.2,465.7 C1394.6,465.7 1394.6,446.5 1394.6,430.8 C1391.5,432.5 1391.5,434 1391.5,434.7 C1387.7,434.7 1387.7,434.7 1387.7,434.7 C1385.1,437.7 1385.1,452.8 1385.1,452.8 C1381.7,452.8 1381.7,447.8 1381.7,443.7 C1379.1,447.8 1379.1,452.8 1379.1,452.8 C1375.5,452.8 1375.5,447.1 1375.5,442.4 C1372.1,447.6 1372.1,450.6 1372.1,454 C1368.8,457.5 1368.8,463.1 1368.8,463.1 C1365.2,463.1 1365.2,455.3 1365.2,448.9 C1362.6,455.3 1362.6,463.1 1362.6,463.1 C1358.7,463.1 1358.7,455.3 1358.7,448.9 C1356.1,455.3 1356.1,463.1 1356.1,463.1 C1352.2,463.1 1352.2,456.8 1352.2,451.5 C1348.9,446.1 1348.9,440.1 1348.9,430.8 C1347.1,450 1347.1,473.4 1347.1,473.4 C1345.5,473.4 1345.5,459.2 1345.5,447.6 C1343.7,462.7 1343.7,481.2 1343.7,481.2 C1341.1,481.2 1341.1,453.5 1341.1,430.8 C1338.5,459.9 1338.5,484.2 1338.5,495.4 C1336.7,498 1336.7,495.4 1336.7,498 C1334.1,504 1334.1,531.1 1334.1,531.1 C1332.1,531.1 1332.1,529.7 1332.1,510.9 C1329.5,492.1 1329.5,433.8 1329.5,418.4 C1275.7,418.4 1275.7,418.4 1275.7,418.4 C1275.7,418.4 1275.8,418.4 1275.8,418.4 C1273.9,420 1273.9,428.2 1273.9,428.2 C1271.9,428.2 1271.9,425.3 1271.9,423 C1268.8,432.3 1268.8,431.4 1268.8,443.7 C1263.3,456 1263.3,496.7 1263.3,496.7 C1259.5,496.7 1259.5,484 1259.5,474.7 C1256.4,465.5 1256.4,456.2 1256.4,441.1 C1253.3,453.9 1253.3,469.6 1253.3,469.6 C1249.1,469.6 1249.1,453.2 1249.1,439.8 C1246.8,446.8 1246.8,455.3 1246.8,455.3 C1243.4,455.3 1243.4,438.3 1243.4,424.3 C1240.3,438.3 1240.3,449.5 1240.3,455.3 C1237,459.2 1237,455.3 1237,459.2 C1232.3,466.3 1232.3,498 1232.3,498 C1226.6,498 1226.6,471.7 1226.6,464.4 C1221.4,457.1 1221.4,458.7 1221.4,454 C1218.1,462.8 1218.1,473.4 1218.1,473.4 C1215,473.4 1215,449.3 1215,429.5 C1209.8,458 1209.8,492.8 1209.8,492.8 C1205.9,492.8 1205.9,440.7 1205.9,428.2 C1203.3,417.8 1203.3,422.5 1203.3,417.8 C1199.5,421.3 1199.5,421.1 1199.5,425.6 C1195.6,430.1 1195.6,439.4 1195.6,445 C1191.2,450.6 1191.2,450 1191.2,459.2 C1186.5,468.5 1186.5,500.6 1186.5,500.6 C1181.4,500.6 1181.4,479.3 1181.4,461.8 C1175.7,464.7 1175.7,468.3 1175.7,468.3 C1172.3,468.3 1172.3,457.6 1172.3,448.9 C1167.9,466.9 1167.9,489 1167.9,489 C1163.3,489 1163.3,466.2 1163.3,447.6 C1159.4,471.4 1159.4,500.6 1159.4,500.6 C1152.9,500.6 1152.9,480.7 1152.9,464.4 C1147.7,465.6 1147.7,467 1147.7,467 C1145.2,467 1145.2,452 1145.2,439.8 C1142.6,458.4 1142.6,481.2 1142.6,481.2 C1137.9,481.2 1137.9,467.2 1137.9,461.8 C1134.3,456.4 1134.3,454.7 1134.3,448.9 C1130.9,455.9 1130.9,457.3 1130.9,464.4 C1127.1,471.5 1127.1,491.5 1127.1,491.5 C1124,491.5 1124,469.5 1124,451.5 C1121.9,469.5 1121.9,491.5 1121.9,491.5 C1119.3,491.5 1119.3,464.5 1119.3,442.4 C1115.9,462.8 1115.9,487.7 1115.9,487.7 C1111.5,487.7 1111.5,462.8 1111.5,442.4 C1108.4,462.8 1108.4,487.7 1108.4,487.7 C1105.6,487.7 1105.6,456.4 1105.6,430.8 C1103,468.6 1103,514.8 1103,514.8 C1098.6,514.8 1098.6,441.1 1098.6,425.6 C1095.5,421.7 1095.5,423.5 1095.5,421.7 C1093.4,443.8 1093.4,470.9 1093.4,470.9 C1091.4,470.9 1091.4,458.8 1091.4,448.9 C1088.8,461.1 1088.8,476 1088.8,476 C1085.7,476 1085.7,469.8 1085.7,464.4 C1083.1,459 1083.1,453 1083.1,443.7 C1080,472.8 1080,508.4 1080,508.4 C1074,508.4 1074,472.8 1074,443.7 C1071.5,445.5 1071.5,444.6 1071.5,447.6 C1068.9,450.6 1068.9,461.8 1068.9,461.8 C1066.3,461.8 1066.3,458.3 1066.3,455.3 C1063.7,462.9 1063.7,472.2 1063.7,472.2 C1061.9,472.2 1061.9,465.8 1061.9,460.5 C1059,485 1059,514.8 1059,514.8 C1055.9,514.8 1055.9,472.2 1055.9,437.2 C1052.1,447.1 1052.1,452.5 1052.1,459.2 C1048.2,465.9 1048.2,477.3 1048.2,477.3 C1044.8,477.3 1044.8,473.8 1044.8,470.9 C1041.7,472 1041.7,471.3 1041.7,473.4 C1039.7,475.6 1039.7,483.8 1039.7,483.8 C1037.1,483.8 1037.1,451.8 1037.1,425.6 C1034.5,451.8 1034.5,483.8 1034.5,483.8 C1031.4,483.8 1031.4,457.5 1031.4,435.9 C1026.7,468.8 1026.7,508.9 1026.7,508.9 C1022.3,508.9 1022.3,473.7 1022.3,445 C1017.7,460.1 1017.7,478.6 1017.7,478.6 C1013.8,478.6 1013.8,463.7 1013.8,451.5 C1011.2,468.3 1011.2,489 1011.2,489 C1008.6,489 1008.6,469.8 1008.6,454 C1006.8,464.5 1006.8,477.3 1006.8,477.3 C1004.2,477.3 1004.2,428.2 1004.2,418.4 Z" fill="#d98a2b" stroke="#f4e2c8" stroke-width="0.8"/><rect x="161" y="394" width="706" height="1" fill="#fff" opacity="0.3"/><rect x="161" y="395" width="706" height="1.1" fill="#111"/><rect x="996" y="395" width="569" height="1.1" fill="#111"/><rect x="926" y="535" width="893" height="229" fill="#d4ddc6"/><rect x="31" y="649" width="10" height="1" fill="#e8f2f2"/><rect x="926" y="649" width="10" height="1" fill="#eef2e6"/><path d="M39.4,649.3 C39.9,646 41.5,633.7 42.5,630 C43.5,626.9 44.3,627.9 45.6,626.9 C46.9,625.9 49,626.2 50.3,623.8 C51.6,621.3 52.5,612 53.4,612 C54.2,612 54.5,618.3 55.8,619.9 C57.1,621.4 58.8,621 61.3,621.4 C63.7,621.8 68,621.8 70.6,622.2 C73.2,622.6 76.9,623.1 76.9,623.8 C76.9,623.4 81.3,623 83.1,623 C84.3,623 86,624 87.1,625.3 C88.1,626.6 89.4,628.3 89.4,630.8 C89.4,630.5 91.6,630 92.5,630 C94.2,630 97,630.4 98,630.8 C98.8,631.2 98.8,631.7 98.8,632.4 C98.8,623.6 101,612.8 101.9,612.8 C102.8,612.8 105,620.6 105,626.9 C105,626.2 106.5,626.2 107.4,625.3 C108.2,624.4 109.2,621.4 110,621.4 C110.9,621.4 111.9,625.5 112.9,626.9 C113.8,628.3 116,628.6 116,630 C116,628.6 119.3,626.9 120.7,626.9 C121.6,626.9 122.6,627.8 123.8,628.5 C125,629.1 127.7,629.7 127.7,630.8 C127.7,629.7 131.2,629.9 132.4,628.5 C133.6,627 134,622.2 134.7,622.2 C135.2,622.2 136.3,625.2 136.3,627.7 C136.3,626.6 140.9,626.4 142.6,625.3 C144.2,624.3 145,622.5 146.5,621.4 C147.9,620.4 149.7,619.1 151.2,619.1 C152.3,619.1 154,621.2 155.1,622.2 C156.1,623.2 157.4,623.9 157.4,625.3 C157.4,624.6 161.2,623.8 162.9,623.8 C164.3,623.8 165.7,624.9 167.6,625.3 C169.4,625.7 172,625.7 173.8,626.1 C175.6,626.5 178.5,627 178.5,627.7 C178.5,627.3 182.5,627.3 184.8,626.9 C187,626.5 190,626.9 191.8,625.3 C193.5,623.6 194.2,616.7 195.2,616.7 C196.1,616.7 198,621.5 198,625.3 C198,624.6 200.8,623.8 202,623.8 C203.4,623.8 206.6,624.6 206.6,625.3 C206.6,625 211,624.6 212.9,624.6 C213.8,624.6 216,625.8 216,626.9 C216,625.1 218.2,623 219.2,623 C220.1,623 221.2,626.8 222.3,627.7 C223.3,628.5 224.2,627.7 225.4,628.5 C226.6,629.4 229.3,631 229.3,633.1 C229.3,631.7 231.8,630.7 233.2,630 C234.7,629.4 236.5,629.2 237.9,629.2 C238.8,629.2 241,629.7 241,630 C241,624 242.7,616.7 243.4,616.7 C244.1,616.7 244.6,620.4 245.7,621.4 C246.9,622.5 250.4,622.3 250.4,623 C250.4,622.3 253.5,621.4 254.8,621.4 C255.8,621.4 258.2,623.6 258.2,625.3 C258.2,625 261.5,625.3 262.9,624.6 C264.4,623.8 265.7,620.6 266.8,620.6 C267.5,620.6 268,624.6 269.2,625.3 C270.3,625.3 272.6,625.3 273.9,625.3 C275.1,624.4 275.8,619.9 276.7,619.9 C277.5,619.9 278,628.1 279.3,630 C280.7,631.6 283.4,631.2 284.8,631.6 C286.2,632 287.9,632 287.9,632.4 C287.9,626 289.9,618.3 290.7,618.3 C292.2,618.3 294.1,619.5 295.7,620.6 C297.4,621.8 298.9,623.9 300.4,625.3 C302,626.8 305.1,627.5 305.1,629.2 C305.1,628.9 309.6,628.9 311.4,628.5 C313.2,628.1 314.7,626.9 316.1,626.9 C317.9,626.9 322.3,628.6 322.3,630 C322.3,628.3 327.7,626.1 330,626.1 C330,626.1 330,626.6 330,626.9 C330.8,627.2 334.7,627.3 334.7,627.7 C334.7,624.2 337.4,619.9 338.6,619.9 C339.5,619.9 341.7,621.2 341.7,622.2 C341.7,621.4 343.9,620.3 344.9,620.3 C346,620.3 347.1,624.5 348.8,625.3 C350.5,625.3 353.2,625.3 355,625.3 C356.8,626 359.7,627.5 359.7,629.2 C359.7,628.9 365.4,628.6 367.5,628.5 C369.6,628.5 370.6,628.5 372.2,628.5 C373.8,628.9 376.9,629.7 376.9,630.8 C376.9,629.7 380.2,628.5 381.6,628.5 C382.5,628.5 384.7,629.3 384.7,630 C384.7,620.9 386.4,609.7 387.1,609.7 C387.7,609.7 389.1,618.7 389.1,626.1 C389.1,625.9 393.8,626 395.7,625.6 C397.5,625.3 398.8,624.6 400.3,623.8 C401.9,623 403.6,621 405,621 C406.4,621 408.2,623.2 409.7,623.8 C411.3,624.4 414.4,624.2 414.4,624.6 C414.4,623.8 416.6,623 417.5,623 C418.4,623 420.4,628.1 420.4,632.4 C420.4,612.2 422.5,587.5 423.5,587.5 C424.5,587.5 425.6,606.3 426.9,611.3 C428.3,616.3 430.3,616 431.6,617.5 C432.9,619.1 434,619.5 434.7,620.6 C435.5,621.8 436.3,622.8 436.3,624.6 C436.3,608.4 438.5,588.6 439.4,588.6 C440.1,588.6 440.5,607.4 441.8,612.8 C443.1,618.3 446.1,619.5 447.2,621.4 C448.4,623.4 448.8,623.1 448.8,624.6 C448.8,614.9 450.4,603.1 451.2,603.1 C452.1,603.1 453.1,616.9 454.3,620.6 C455.4,624.3 458.2,623.2 458.2,625.3 C458.2,622.2 461.5,618.3 462.9,618.3 C463.6,618.3 463.9,623.4 465.2,625.3 C466.5,627.3 468.6,629 470.7,630 C472.8,631.1 477.7,630.9 477.7,631.6 C477.7,621.4 480.7,608.9 481.9,608.9 C482.8,608.9 484.8,616.2 484.8,622.2 C484.8,620.1 487.2,617.5 488.2,617.5 C489,617.5 489.5,624.9 491,626.9 C492.5,628.9 497.3,628.2 497.3,629.2 C497.3,628.5 500.5,627.7 502,627.7 C503.4,627.7 506.6,629 506.6,630 C506.6,629.3 510.8,630 512.9,628.5 C515,626.8 517.3,619.9 519.2,619.9 C521,619.9 525.4,622.9 525.4,625.3 C525.4,620.1 528.7,613.6 530.1,613.6 C531,613.6 533.2,619.6 533.2,624.6 C533.2,618.2 535.6,610.5 536.7,610.5 C537.7,610.5 540.3,616.5 540.3,621.4 C540.3,620.4 542.1,619.9 543.4,619.1 C544.7,618.2 546.7,616.3 548.1,616.3 C549.2,616.3 550.8,619.8 552,621.4 C553.2,623.1 555.1,624 555.1,626.1 C555.1,625.4 557.8,624.6 559,624.6 C560.2,624.6 562.9,625.8 562.9,626.9 C562.9,623.7 565.3,619.9 566.4,619.9 C567.2,619.9 569.2,623.7 569.2,626.9 C569.2,618.5 570.5,608.1 571.1,608.1 C571.9,608.1 573.9,618.5 573.9,626.9 C573.9,612.8 576.3,595.6 577.3,595.6 C578.1,595.6 580.1,611.1 580.1,623.8 C580.1,616.7 582.3,608.1 583.2,608.1 C584.2,608.1 586.4,614.2 586.4,619.1 C586.4,616.3 588.6,612.8 589.5,612.8 C590.4,612.8 592.6,618 592.6,622.2 C592.6,618.7 597,614.4 598.9,614.4 C600.3,614.4 603.6,619.5 603.6,623.8 C603.6,620.3 606.3,616 607.5,616 C608.2,616 609.8,622 609.8,626.9 C609.8,606.8 612.2,582.3 613.3,582.3 C614.3,582.3 615.3,612 616.9,618.3 C618.4,619.9 621,618.8 622.3,619.9 C623.6,620.9 624.7,622.4 624.7,624.6 C624.7,617.2 625.2,608.1 625.5,608.1 C626.2,608.1 627.8,615.9 627.8,622.2 C627.8,611.7 630.4,598.8 631.6,598.8 C632.3,598.8 633,611.5 633.9,614.4 C634.8,616 636,614.4 637,616 C638.1,617.5 640.2,620.3 640.2,623.8 C640.2,618.5 642.3,612 643.3,612 C644,612 644.5,620.1 645.6,622.2 C646.8,624.3 650.3,623.5 650.3,624.6 C650.3,623.5 653.6,622.2 655,622.2 C656.2,622.2 657.5,627.2 658.9,628.5 C660.4,629.8 662,629.6 663.6,630 C665.2,630.4 668.3,630.5 668.3,630.8 C668.3,626.9 670.5,622.2 671.4,622.2 C673.1,622.2 675.5,623.1 676.9,623.8 C678.3,624.4 679,624.9 680,626.1 C681.1,627.3 683.1,628.7 683.1,630.8 C683.1,630.1 687.5,629.2 689.4,629.2 C691,629.2 694.9,630.5 694.9,631.6 C694.9,630.5 698.9,630 700.3,629.2 C701.8,628.5 702.3,628.1 703.5,626.9 C704.6,625.7 706.2,622.2 707.4,622.2 C709,622.2 712.9,624.4 712.9,626.1 C712.9,618.4 716.7,608.9 718.3,608.9 C720,608.9 723.8,617.1 723.8,623.8 C723.8,622.7 726.5,621.4 727.7,621.4 C729.3,621.4 733.2,622.3 733.2,623 C733.2,620.5 736.5,617.5 737.9,617.5 C738.8,617.5 741,621.8 741,625.3 C741,625 745.4,625.3 747.2,624.6 C749.1,623.8 750.5,620.6 751.9,620.6 C753.6,620.6 756.3,624.4 757.4,626.1 C758.5,627.8 758.5,628.7 758.5,630.8 C758.5,621.3 760.5,609.7 761.3,609.7 C762.2,609.7 764.4,618.7 764.4,626.1 C764.4,625.1 767.7,626.1 769.1,623.8 C770.6,619.5 771.9,600.3 773,600.3 C773.7,600.3 775.4,610.6 775.4,619.1 C775.4,616.6 776.5,613.6 776.9,613.6 C777.9,613.6 780.1,617.5 780.1,620.6 C780.1,618.9 781.7,616.7 782.4,616.7 C783.6,616.7 784.9,619.2 786.3,620.6 C787.8,622.1 791,623.2 791,625.3 C791,621.8 793.7,617.5 794.9,617.5 C796.1,617.5 797.7,624 798.8,626.9 C799.9,629.8 801.6,631.2 801.6,634.7 C801.6,631.5 803.5,627.7 804.3,627.7 C806.6,627.7 812.1,628.1 812.1,628.5 C812.1,619.3 814.9,608.1 816,608.1 C817,608.1 819.2,615.9 819.2,622.2 C819.2,618 820.8,612.8 821.5,612.8 C822.4,612.8 824.6,619.7 824.6,625.3 C824.6,625 828.5,624.6 830.1,624.6 C831,624.6 833.2,625.8 833.2,626.9 C833.2,623 836.5,618.3 837.9,618.3 C838.8,618.3 841,621.7 841,624.6 C841,620.3 843.8,615.2 844.9,615.2 C846.1,615.2 847.8,620.6 848.9,623 C849.9,625.3 850.2,628.1 851.2,629.2 C852.2,630 853.5,629.2 855.1,630 C856.7,630.8 860.6,632.2 860.6,633.9 C860.6,622.7 862.5,608.9 863.4,608.9 C864.2,608.9 864.8,617.3 866,619.1 C867.3,619.9 869.7,619.1 870.7,619.9 C871.8,621.7 872.3,625.5 872.3,630 C872.3,619.5 874.3,606.6 875.1,606.6 C875.7,606.6 877,616.9 877,625.3 C877,621.5 878.1,616.7 878.6,616.7 C879.5,616.7 879.9,626 881.7,628.5 C883.5,630.9 889.5,630.2 889.5,631.6 C889.5,628.8 892.6,626.4 894.2,625.3 C895.7,625.3 897.4,625.3 898.9,625.3 C900.3,625.1 901.6,623.8 902.8,623.8 C904.4,623.8 908.3,627.6 908.3,630.8 C908.3,622.7 910.4,612.8 911.4,612.8 C912.1,612.8 913.7,617.1 913.7,620.6 C913.7,617.5 915.9,613.6 916.9,613.6 C917.6,613.6 919.2,618.8 919.2,623 C919.2,622.6 920.6,622.7 921.5,622.2 C922.5,621.7 923.7,619.9 924.7,619.9 C924.9,619.9 925.3,644.4 925.5,649.3 L925.5,649.2 C924.7,654.1 924.7,678.6 924.7,678.6 C921.5,678.6 921.5,676.8 921.5,676.3 C919.2,675.8 919.2,675.9 919.2,675.5 C916.9,679.3 916.9,683.9 916.9,683.9 C913.7,683.9 913.7,680.6 913.7,677.9 C911.4,680.8 911.4,684.4 911.4,684.4 C908.3,684.4 908.3,675.2 908.3,667.7 C902.8,670.9 902.8,674.7 902.8,674.7 C898.9,674.7 898.9,673.4 898.9,673.2 C894.2,673.2 894.2,673.2 894.2,673.2 C889.5,672.1 889.5,669.7 889.5,666.9 C881.7,668.3 881.7,667.6 881.7,670 C878.6,672.5 878.6,681.6 878.6,681.6 C877,681.6 877,677 877,673.2 C875.1,680.3 875.1,688.9 875.1,688.9 C872.3,688.9 872.3,677.7 872.3,668.5 C870.7,673 870.7,676.8 870.7,678.6 C866,679.4 866,678.6 866,679.4 C863.4,680.9 863.4,687.2 863.4,687.2 C860.6,687.2 860.6,674.8 860.6,664.6 C855.1,666.3 855.1,667.7 855.1,668.5 C851.2,669.3 851.2,668.5 851.2,669.3 C848.9,670.4 848.9,673.3 848.9,675.5 C844.9,677.8 844.9,682.7 844.9,682.7 C841,682.7 841,677.9 841,673.9 C837.9,676.8 837.9,680.2 837.9,680.2 C833.2,680.2 833.2,675.5 833.2,671.6 C830.1,672.7 830.1,673.9 830.1,673.9 C824.6,673.9 824.6,673.5 824.6,673.2 C821.5,678.2 821.5,684.4 821.5,684.4 C819.2,684.4 819.2,680 819.2,676.3 C816,681.5 816,687.8 816,687.8 C812.1,687.8 812.1,678 812.1,670 C804.3,670.4 804.3,670.8 804.3,670.8 C801.6,670.8 801.6,667 801.6,663.8 C798.8,667.3 798.8,668.7 798.8,671.6 C794.9,674.5 794.9,681 794.9,681 C791,681 791,676.7 791,673.2 C786.3,675.3 786.3,676.4 786.3,677.9 C782.4,679.3 782.4,681.6 782.4,681.6 C780.1,681.6 780.1,679.5 780.1,677.9 C776.9,680.6 776.9,683.9 776.9,683.9 C775.4,683.9 775.4,681.4 775.4,679.4 C773,685.7 773,693.4 773,693.4 C769.1,693.4 769.1,678.2 769.1,674.7 C764.4,672.4 764.4,673.4 764.4,672.4 C761.3,678.8 761.3,686.7 761.3,686.7 C758.5,686.7 758.5,676.2 758.5,667.7 C757.4,669.8 757.4,670.7 757.4,672.4 C751.9,674.1 751.9,677.9 751.9,677.9 C747.2,677.9 747.2,674.7 747.2,673.9 C741,673.2 741,673.5 741,673.2 C737.9,676.7 737.9,681 737.9,681 C733.2,681 733.2,678 733.2,675.5 C727.7,676.2 727.7,677.1 727.7,677.1 C723.8,677.1 723.8,675.8 723.8,674.7 C718.3,680.4 718.3,687.2 718.3,687.2 C712.9,687.2 712.9,679.1 712.9,672.4 C707.4,674.1 707.4,676.3 707.4,676.3 C703.5,676.3 703.5,672.8 703.5,671.6 C700.3,670.4 700.3,670 700.3,669.3 C694.9,668.5 694.9,668 694.9,666.9 C689.4,668 689.4,669.3 689.4,669.3 C683.1,669.3 683.1,668.4 683.1,667.7 C680,669.8 680,671.2 680,672.4 C676.9,673.6 676.9,674.1 676.9,674.7 C671.4,675.4 671.4,676.3 671.4,676.3 C668.3,676.3 668.3,671.6 668.3,667.7 C663.6,668 663.6,668.1 663.6,668.5 C658.9,668.9 658.9,668.7 658.9,670 C655,671.3 655,676.3 655,676.3 C650.3,676.3 650.3,675 650.3,673.9 C645.6,675 645.6,674.5 645.6,676.3 C643.3,678.1 643.3,685 643.3,685 C640.2,685 640.2,679.3 640.2,674.7 C637,678.1 637,680.8 637,682.2 C633.9,683.3 633.9,682.2 633.9,683.3 C631.6,685.4 631.6,694.6 631.6,694.6 C627.8,694.6 627.8,684.5 627.8,676.3 C625.5,681.5 625.5,687.8 625.5,687.8 C624.7,687.8 624.7,680.2 624.7,673.9 C622.3,676.1 622.3,677.6 622.3,678.6 C616.9,679.7 616.9,678.6 616.9,680.2 C613.3,684.8 613.3,706.4 613.3,706.4 C609.8,706.4 609.8,687.3 609.8,671.6 C607.5,676.4 607.5,682.2 607.5,682.2 C603.6,682.2 603.6,678.1 603.6,674.7 C598.9,678.6 598.9,683.3 598.9,683.3 C592.6,683.3 592.6,679.4 592.6,676.3 C589.5,680 589.5,684.4 589.5,684.4 C586.4,684.4 586.4,681.7 586.4,679.4 C583.2,683.2 583.2,687.8 583.2,687.8 C580.1,687.8 580.1,680.6 580.1,674.7 C577.3,684.7 577.3,696.8 577.3,696.8 C573.9,696.8 573.9,682.9 573.9,671.6 C571.1,678.9 571.1,687.8 571.1,687.8 C569.2,687.8 569.2,678.9 569.2,671.6 C566.4,674.8 566.4,678.6 566.4,678.6 C562.9,678.6 562.9,674.8 562.9,671.6 C559,672.7 559,673.9 559,673.9 C555.1,673.9 555.1,673.1 555.1,672.4 C552,674.5 552,675.5 552,677.1 C548.1,678.7 548.1,682 548.1,682 C543.4,682 543.4,680.2 543.4,679.4 C540.3,678.6 540.3,678.1 540.3,677.1 C536.7,681.1 536.7,686.1 536.7,686.1 C533.2,686.1 533.2,679.4 533.2,673.9 C530.1,678.4 530.1,683.9 530.1,683.9 C525.4,683.9 525.4,678 525.4,673.2 C519.2,675.6 519.2,678.6 519.2,678.6 C512.9,678.6 512.9,671.7 512.9,670 C506.6,668.5 506.6,669.2 506.6,668.5 C502,669.5 502,670.8 502,670.8 C497.3,670.8 497.3,670 497.3,669.3 C491,670.3 491,669.6 491,671.6 C488.2,673.6 488.2,681 488.2,681 C484.8,681 484.8,678.4 484.8,676.3 C481.9,681.2 481.9,687.2 481.9,687.2 C477.7,687.2 477.7,676.1 477.7,666.9 C470.7,667.6 470.7,667.4 470.7,668.5 C465.2,669.5 465.2,671.2 465.2,673.2 C462.9,675.1 462.9,680.2 462.9,680.2 C458.2,680.2 458.2,676.3 458.2,673.2 C454.3,675.3 454.3,674.8 454.3,677.9 C451.2,680.9 451.2,691.4 451.2,691.4 C448.8,691.4 448.8,681.8 448.8,673.9 C447.2,675.4 447.2,675.3 447.2,677.1 C441.8,678.8 441.8,680.3 441.8,684.4 C439.4,688.6 439.4,701.9 439.4,701.9 C436.3,701.9 436.3,686.5 436.3,673.9 C434.7,675.7 434.7,676.7 434.7,677.9 C431.6,679 431.6,679.7 431.6,681 C426.9,682.3 426.9,681.9 426.9,685.6 C423.5,689.2 423.5,702.7 423.5,702.7 C420.4,702.7 420.4,682.6 420.4,666.1 C417.5,670.4 417.5,675.5 417.5,675.5 C414.4,675.5 414.4,674.7 414.4,673.9 C409.7,674.3 409.7,674.1 409.7,674.7 C405,675.3 405,677.5 405,677.5 C400.3,677.5 400.3,675.5 400.3,674.7 C395.7,673.9 395.7,673.2 395.7,672.9 C389.1,672.5 389.1,672.6 389.1,672.4 C387.1,678.8 387.1,686.7 387.1,686.7 C384.7,686.7 384.7,676.7 384.7,668.5 C381.6,669.2 381.6,670 381.6,670 C376.9,670 376.9,668.8 376.9,667.7 C372.2,668.8 372.2,669.6 372.2,670 C367.5,670 367.5,670 367.5,670 C359.7,669.9 359.7,669.6 359.7,669.3 C355,671 355,672.5 355,673.2 C348.8,673.2 348.8,673.2 348.8,673.2 C344.9,674 344.9,678.2 344.9,678.2 C341.7,678.2 341.7,677.1 341.7,676.3 C338.6,677.3 338.6,678.6 338.6,678.6 C334.7,678.6 334.7,674.3 334.7,670.8 C330,671.2 330,671.3 330,671.6 C330,671.9 330,672.4 330,672.4 C322.3,672.4 322.3,670.2 322.3,668.5 C316.1,669.9 316.1,671.6 316.1,671.6 C311.4,671.6 311.4,670.4 311.4,670 C305.1,669.6 305.1,669.6 305.1,669.3 C300.4,671 300.4,671.7 300.4,673.2 C295.7,674.6 295.7,676.7 295.7,677.9 C290.7,679 290.7,680.2 290.7,680.2 C287.9,680.2 287.9,672.5 287.9,666.1 C284.8,666.5 284.8,666.5 284.8,666.9 C279.3,667.3 279.3,666.9 279.3,668.5 C276.7,670.4 276.7,678.6 276.7,678.6 C273.9,678.6 273.9,674.1 273.9,673.2 C269.2,673.2 269.2,673.2 269.2,673.2 C266.8,673.9 266.8,677.9 266.8,677.9 C262.9,677.9 262.9,674.7 262.9,673.9 C258.2,673.2 258.2,673.5 258.2,673.2 C254.8,674.9 254.8,677.1 254.8,677.1 C250.4,677.1 250.4,676.2 250.4,675.5 C245.7,676.2 245.7,676.1 245.7,677.1 C243.4,678.1 243.4,681.6 243.4,681.6 C241,681.6 241,674.4 241,668.5 C237.9,668.8 237.9,669.3 237.9,669.3 C233.2,669.3 233.2,669.1 233.2,668.5 C229.3,667.8 229.3,666.8 229.3,665.4 C225.4,667.5 225.4,669.1 225.4,670 C222.3,670.8 222.3,670 222.3,670.8 C219.2,671.7 219.2,675.5 219.2,675.5 C216,675.5 216,673.4 216,671.6 C212.9,672.7 212.9,673.9 212.9,673.9 C206.6,673.9 206.6,673.5 206.6,673.2 C202,673.9 202,674.7 202,674.7 C198,674.7 198,673.9 198,673.2 C195.2,677 195.2,681.6 195.2,681.6 C191.8,681.6 191.8,674.8 191.8,673.2 C184.8,671.6 184.8,672 184.8,671.6 C178.5,671.2 178.5,671.2 178.5,670.8 C173.8,671.5 173.8,672 173.8,672.4 C167.6,672.8 167.6,672.8 167.6,673.2 C162.9,673.6 162.9,674.7 162.9,674.7 C157.4,674.7 157.4,673.9 157.4,673.2 C155.1,674.6 155.1,675.3 155.1,676.3 C151.2,677.3 151.2,679.4 151.2,679.4 C146.5,679.4 146.5,678.1 146.5,677.1 C142.6,676 142.6,674.2 142.6,673.2 C136.3,672.1 136.3,671.9 136.3,670.8 C134.7,673.3 134.7,676.3 134.7,676.3 C132.4,676.3 132.4,671.5 132.4,670 C127.7,668.6 127.7,668.8 127.7,667.7 C123.8,668.8 123.8,669.4 123.8,670 C120.7,670.7 120.7,671.6 120.7,671.6 C116,671.6 116,669.9 116,668.5 C112.9,669.9 112.9,670.2 112.9,671.6 C110,673 110,677.1 110,677.1 C107.4,677.1 107.4,674.1 107.4,673.2 C105,672.3 105,672.3 105,671.6 C101.9,677.4 101.9,684.4 101.9,684.4 C98.8,684.4 98.8,674.4 98.8,666.1 C98,666.8 98,667.3 98,667.7 C92.5,668.1 92.5,668.5 92.5,668.5 C89.4,668.5 89.4,668 89.4,667.7 C87.1,670.2 87.1,671.9 87.1,673.2 C83.1,674.5 83.1,675.5 83.1,675.5 C76.9,675.5 76.9,675.1 76.9,674.7 C70.6,675.4 70.6,675.9 70.6,676.3 C61.3,676.7 61.3,676.7 61.3,677.1 C55.8,677.5 55.8,677.3 55.8,678.6 C53.4,680 53.4,685 53.4,685 C50.3,685 50.3,677 50.3,674.7 C45.6,672.5 45.6,672.6 45.6,671.6 C42.5,670.6 42.5,671.6 42.5,668.5 C39.4,664.8 39.4,652.5 39.4,649.2 Z" fill="#279a8f" stroke="#e4f2f0" stroke-width="0.9"/><path d="M934.4,649.3 C934.9,646 936.5,633.7 937.5,630 C938.5,626.9 939.3,627.9 940.6,626.9 C941.9,625.9 944,626.2 945.3,623.8 C946.6,621.3 947.5,612 948.4,612 C949.2,612 949.5,618.3 950.8,619.9 C952.1,621.4 953.8,621 956.3,621.4 C958.7,621.8 963,621.8 965.6,622.2 C968.2,622.6 971.9,623.1 971.9,623.8 C971.9,623.4 976.3,623 978.1,623 C979.3,623 981,624 982.1,625.3 C983.1,626.6 984.4,628.3 984.4,630.8 C984.4,630.5 986.6,630 987.5,630 C989.2,630 992,630.4 993,630.8 C993.8,631.2 993.8,631.7 993.8,632.4 C993.8,623.6 996,612.8 996.9,612.8 C997.8,612.8 1000,620.6 1000,626.9 C1000,626.2 1001.5,626.2 1002.4,625.3 C1003.2,624.4 1004.2,621.4 1005,621.4 C1005.9,621.4 1006.9,625.5 1007.9,626.9 C1008.8,628.3 1011,628.6 1011,630 C1011,628.6 1014.3,626.9 1015.7,626.9 C1016.6,626.9 1017.6,627.8 1018.8,628.5 C1020,629.1 1022.7,629.7 1022.7,630.8 C1022.7,629.7 1026.2,629.9 1027.4,628.5 C1028.6,627 1029,622.2 1029.7,622.2 C1030.2,622.2 1031.3,625.2 1031.3,627.7 C1031.3,626.6 1035.9,626.4 1037.6,625.3 C1039.2,624.3 1040,622.5 1041.5,621.4 C1042.9,620.4 1044.7,619.1 1046.2,619.1 C1047.3,619.1 1049,621.2 1050.1,622.2 C1051.1,623.2 1052.4,623.9 1052.4,625.3 C1052.4,624.6 1056.2,623.8 1057.9,623.8 C1059.3,623.8 1060.7,624.9 1062.6,625.3 C1064.4,625.7 1067,625.7 1068.8,626.1 C1070.6,626.5 1073.5,627 1073.5,627.7 C1073.5,627.3 1077.5,627.3 1079.8,626.9 C1082,626.5 1085,626.9 1086.8,625.3 C1088.5,623.6 1089.2,616.7 1090.2,616.7 C1091.1,616.7 1093,621.5 1093,625.3 C1093,624.6 1095.8,623.8 1097,623.8 C1098.4,623.8 1101.6,624.6 1101.6,625.3 C1101.6,625 1106,624.6 1107.9,624.6 C1108.8,624.6 1111,625.8 1111,626.9 C1111,625.1 1113.2,623 1114.2,623 C1115.1,623 1116.2,626.8 1117.3,627.7 C1118.3,628.5 1119.2,627.7 1120.4,628.5 C1121.6,629.4 1124.3,631 1124.3,633.1 C1124.3,631.7 1126.8,630.7 1128.2,630 C1129.7,629.4 1131.5,629.2 1132.9,629.2 C1133.8,629.2 1136,629.7 1136,630 C1136,624 1137.7,616.7 1138.4,616.7 C1139.1,616.7 1139.6,620.4 1140.7,621.4 C1141.9,622.5 1145.4,622.3 1145.4,623 C1145.4,622.3 1148.5,621.4 1149.8,621.4 C1150.8,621.4 1153.2,623.6 1153.2,625.3 C1153.2,625 1156.5,625.3 1157.9,624.6 C1159.4,623.8 1160.7,620.6 1161.8,620.6 C1162.5,620.6 1163,624.6 1164.2,625.3 C1165.3,625.3 1167.6,625.3 1168.9,625.3 C1170.1,624.4 1170.8,619.9 1171.7,619.9 C1172.5,619.9 1173,628.1 1174.3,630 C1175.7,631.6 1178.4,631.2 1179.8,631.6 C1181.2,632 1182.9,632 1182.9,632.4 C1182.9,626 1184.9,618.3 1185.7,618.3 C1187.2,618.3 1189.1,619.5 1190.7,620.6 C1192.4,621.8 1193.9,623.9 1195.4,625.3 C1197,626.8 1200.1,627.5 1200.1,629.2 C1200.1,628.9 1204.6,628.9 1206.4,628.5 C1208.2,628.1 1209.7,626.9 1211.1,626.9 C1212.9,626.9 1217.3,628.6 1217.3,630 C1217.3,628.3 1222.7,626.1 1225,626.1 C1225,626.1 1225,626.6 1225,626.9 C1225.8,627.2 1229.7,627.3 1229.7,627.7 C1229.7,624.2 1232.4,619.9 1233.6,619.9 C1234.5,619.9 1236.7,621.2 1236.7,622.2 C1236.7,621.4 1238.9,620.3 1239.9,620.3 C1241,620.3 1242.1,624.5 1243.8,625.3 C1245.5,625.3 1248.2,625.3 1250,625.3 C1251.8,626 1254.7,627.5 1254.7,629.2 C1254.7,628.9 1260.4,628.6 1262.5,628.5 C1264.6,628.5 1265.6,628.5 1267.2,628.5 C1268.8,628.9 1271.9,629.7 1271.9,630.8 C1271.9,629.7 1275.2,628.5 1276.6,628.5 C1277.5,628.5 1279.7,629.3 1279.7,630 C1279.7,620.9 1281.4,609.7 1282.1,609.7 C1282.7,609.7 1284.1,618.7 1284.1,626.1 C1284.1,625.9 1288.8,626 1290.7,625.6 C1292.5,625.3 1293.8,624.6 1295.3,623.8 C1296.9,623 1298.6,621 1300,621 C1301.4,621 1303.2,623.2 1304.7,623.8 C1306.3,624.4 1309.4,624.2 1309.4,624.6 C1309.4,623.8 1311.6,623 1312.5,623 C1313.4,623 1315.4,628.1 1315.4,632.4 C1315.4,612.2 1317.5,587.5 1318.5,587.5 C1319.5,587.5 1320.6,606.3 1321.9,611.3 C1323.3,616.3 1325.3,616 1326.6,617.5 C1327.9,619.1 1329,619.5 1329.7,620.6 C1330.5,621.8 1331.3,622.8 1331.3,624.6 C1331.3,608.4 1333.5,588.6 1334.4,588.6 C1335.1,588.6 1335.5,607.4 1336.8,612.8 C1338.1,618.3 1341.1,619.5 1342.2,621.4 C1343.4,623.4 1343.8,623.1 1343.8,624.6 C1343.8,614.9 1345.4,603.1 1346.2,603.1 C1347.1,603.1 1348.1,616.9 1349.3,620.6 C1350.4,624.3 1353.2,623.2 1353.2,625.3 C1353.2,622.2 1356.5,618.3 1357.9,618.3 C1358.6,618.3 1358.9,623.4 1360.2,625.3 C1361.5,627.3 1363.6,629 1365.7,630 C1367.8,631.1 1372.7,630.9 1372.7,631.6 C1372.7,621.4 1375.7,608.9 1376.9,608.9 C1377.8,608.9 1379.8,616.2 1379.8,622.2 C1379.8,620.1 1382.2,617.5 1383.2,617.5 C1384,617.5 1384.5,624.9 1386,626.9 C1387.5,628.9 1392.3,628.2 1392.3,629.2 C1392.3,628.5 1395.5,627.7 1397,627.7 C1398.4,627.7 1401.6,629 1401.6,630 C1401.6,629.3 1405.8,630 1407.9,628.5 C1410,626.8 1412.3,619.9 1414.2,619.9 C1416,619.9 1420.4,622.9 1420.4,625.3 C1420.4,620.1 1423.7,613.6 1425.1,613.6 C1426,613.6 1428.2,619.6 1428.2,624.6 C1428.2,618.2 1430.6,610.5 1431.7,610.5 C1432.7,610.5 1435.3,616.5 1435.3,621.4 C1435.3,620.4 1437.1,619.9 1438.4,619.1 C1439.7,618.2 1441.7,616.3 1443.1,616.3 C1444.2,616.3 1445.8,619.8 1447,621.4 C1448.2,623.1 1450.1,624 1450.1,626.1 C1450.1,625.4 1452.8,624.6 1454,624.6 C1455.2,624.6 1457.9,625.8 1457.9,626.9 C1457.9,623.7 1460.3,619.9 1461.4,619.9 C1462.2,619.9 1464.2,623.7 1464.2,626.9 C1464.2,618.5 1465.5,608.1 1466.1,608.1 C1466.9,608.1 1468.9,618.5 1468.9,626.9 C1468.9,612.8 1471.3,595.6 1472.3,595.6 C1473.1,595.6 1475.1,611.1 1475.1,623.8 C1475.1,616.7 1477.3,608.1 1478.2,608.1 C1479.2,608.1 1481.4,614.2 1481.4,619.1 C1481.4,616.3 1483.6,612.8 1484.5,612.8 C1485.4,612.8 1487.6,618 1487.6,622.2 C1487.6,618.7 1492,614.4 1493.9,614.4 C1495.3,614.4 1498.6,619.5 1498.6,623.8 C1498.6,620.3 1501.3,616 1502.5,616 C1503.2,616 1504.8,622 1504.8,626.9 C1504.8,606.8 1507.2,582.3 1508.3,582.3 C1509.3,582.3 1510.3,612 1511.9,618.3 C1513.4,619.9 1516,618.8 1517.3,619.9 C1518.6,620.9 1519.7,622.4 1519.7,624.6 C1519.7,617.2 1520.2,608.1 1520.5,608.1 C1521.2,608.1 1522.8,615.9 1522.8,622.2 C1522.8,611.7 1525.4,598.8 1526.6,598.8 C1527.3,598.8 1528,611.5 1528.9,614.4 C1529.8,616 1531,614.4 1532,616 C1533.1,617.5 1535.2,620.3 1535.2,623.8 C1535.2,618.5 1537.3,612 1538.3,612 C1539,612 1539.5,620.1 1540.6,622.2 C1541.8,624.3 1545.3,623.5 1545.3,624.6 C1545.3,623.5 1548.6,622.2 1550,622.2 C1551.2,622.2 1552.5,627.2 1553.9,628.5 C1555.4,629.8 1557,629.6 1558.6,630 C1560.2,630.4 1563.3,630.5 1563.3,630.8 C1563.3,626.9 1565.5,622.2 1566.4,622.2 C1568.1,622.2 1570.5,623.1 1571.9,623.8 C1573.3,624.4 1574,624.9 1575,626.1 C1576.1,627.3 1578.1,628.7 1578.1,630.8 C1578.1,630.1 1582.5,629.2 1584.4,629.2 C1586,629.2 1589.9,630.5 1589.9,631.6 C1589.9,630.5 1593.9,630 1595.3,629.2 C1596.8,628.5 1597.3,628.1 1598.5,626.9 C1599.6,625.7 1601.2,622.2 1602.4,622.2 C1604,622.2 1607.9,624.4 1607.9,626.1 C1607.9,618.4 1611.7,608.9 1613.3,608.9 C1615,608.9 1618.8,617.1 1618.8,623.8 C1618.8,622.7 1621.5,621.4 1622.7,621.4 C1624.3,621.4 1628.2,622.3 1628.2,623 C1628.2,620.5 1631.5,617.5 1632.9,617.5 C1633.8,617.5 1636,621.8 1636,625.3 C1636,625 1640.4,625.3 1642.2,624.6 C1644.1,623.8 1645.5,620.6 1646.9,620.6 C1648.6,620.6 1651.3,624.4 1652.4,626.1 C1653.5,627.8 1653.5,628.7 1653.5,630.8 C1653.5,621.3 1655.5,609.7 1656.3,609.7 C1657.2,609.7 1659.4,618.7 1659.4,626.1 C1659.4,625.1 1662.7,626.1 1664.1,623.8 C1665.6,619.5 1666.9,600.3 1668,600.3 C1668.7,600.3 1670.4,610.6 1670.4,619.1 C1670.4,616.6 1671.5,613.6 1671.9,613.6 C1672.9,613.6 1675.1,617.5 1675.1,620.6 C1675.1,618.9 1676.7,616.7 1677.4,616.7 C1678.6,616.7 1679.9,619.2 1681.3,620.6 C1682.8,622.1 1686,623.2 1686,625.3 C1686,621.8 1688.7,617.5 1689.9,617.5 C1691.1,617.5 1692.7,624 1693.8,626.9 C1694.9,629.8 1696.6,631.2 1696.6,634.7 C1696.6,631.5 1698.5,627.7 1699.3,627.7 C1701.6,627.7 1707.1,628.1 1707.1,628.5 C1707.1,619.3 1709.9,608.1 1711,608.1 C1712,608.1 1714.2,615.9 1714.2,622.2 C1714.2,618 1715.8,612.8 1716.5,612.8 C1717.4,612.8 1719.6,619.7 1719.6,625.3 C1719.6,625 1723.5,624.6 1725.1,624.6 C1726,624.6 1728.2,625.8 1728.2,626.9 C1728.2,623 1731.5,618.3 1732.9,618.3 C1733.8,618.3 1736,621.7 1736,624.6 C1736,620.3 1738.8,615.2 1739.9,615.2 C1741.1,615.2 1742.8,620.6 1743.9,623 C1744.9,625.3 1745.2,628.1 1746.2,629.2 C1747.2,630 1748.5,629.2 1750.1,630 C1751.7,630.8 1755.6,632.2 1755.6,633.9 C1755.6,622.7 1757.5,608.9 1758.4,608.9 C1759.2,608.9 1759.8,617.3 1761,619.1 C1762.3,619.9 1764.7,619.1 1765.7,619.9 C1766.8,621.7 1767.3,625.5 1767.3,630 C1767.3,619.5 1769.3,606.6 1770.1,606.6 C1770.7,606.6 1772,616.9 1772,625.3 C1772,621.5 1773.1,616.7 1773.6,616.7 C1774.5,616.7 1774.9,626 1776.7,628.5 C1778.5,630.9 1784.5,630.2 1784.5,631.6 C1784.5,628.8 1787.6,626.4 1789.2,625.3 C1790.7,625.3 1792.4,625.3 1793.9,625.3 C1795.3,625.1 1796.6,623.8 1797.8,623.8 C1799.4,623.8 1803.3,627.6 1803.3,630.8 C1803.3,622.7 1805.4,612.8 1806.4,612.8 C1807.1,612.8 1808.7,617.1 1808.7,620.6 C1808.7,617.5 1810.9,613.6 1811.9,613.6 C1812.6,613.6 1814.2,618.8 1814.2,623 C1814.2,622.6 1815.6,622.7 1816.5,622.2 C1817.5,621.7 1818.7,619.9 1819.7,619.9 C1819.9,619.9 1820.3,644.4 1820.5,649.3 L1820.5,649.2 C1819.7,654.1 1819.7,678.6 1819.7,678.6 C1816.5,678.6 1816.5,676.8 1816.5,676.3 C1814.2,675.8 1814.2,675.9 1814.2,675.5 C1811.9,679.3 1811.9,683.9 1811.9,683.9 C1808.7,683.9 1808.7,680.6 1808.7,677.9 C1806.4,680.8 1806.4,684.4 1806.4,684.4 C1803.3,684.4 1803.3,675.2 1803.3,667.7 C1797.8,670.9 1797.8,674.7 1797.8,674.7 C1793.9,674.7 1793.9,673.4 1793.9,673.2 C1789.2,673.2 1789.2,673.2 1789.2,673.2 C1784.5,672.1 1784.5,669.7 1784.5,666.9 C1776.7,668.3 1776.7,667.6 1776.7,670 C1773.6,672.5 1773.6,681.6 1773.6,681.6 C1772,681.6 1772,677 1772,673.2 C1770.1,680.3 1770.1,688.9 1770.1,688.9 C1767.3,688.9 1767.3,677.7 1767.3,668.5 C1765.7,673 1765.7,676.8 1765.7,678.6 C1761,679.4 1761,678.6 1761,679.4 C1758.4,680.9 1758.4,687.2 1758.4,687.2 C1755.6,687.2 1755.6,674.8 1755.6,664.6 C1750.1,666.3 1750.1,667.7 1750.1,668.5 C1746.2,669.3 1746.2,668.5 1746.2,669.3 C1743.9,670.4 1743.9,673.3 1743.9,675.5 C1739.9,677.8 1739.9,682.7 1739.9,682.7 C1736,682.7 1736,677.9 1736,673.9 C1732.9,676.8 1732.9,680.2 1732.9,680.2 C1728.2,680.2 1728.2,675.5 1728.2,671.6 C1725.1,672.7 1725.1,673.9 1725.1,673.9 C1719.6,673.9 1719.6,673.5 1719.6,673.2 C1716.5,678.2 1716.5,684.4 1716.5,684.4 C1714.2,684.4 1714.2,680 1714.2,676.3 C1711,681.5 1711,687.8 1711,687.8 C1707.1,687.8 1707.1,678 1707.1,670 C1699.3,670.4 1699.3,670.8 1699.3,670.8 C1696.6,670.8 1696.6,667 1696.6,663.8 C1693.8,667.3 1693.8,668.7 1693.8,671.6 C1689.9,674.5 1689.9,681 1689.9,681 C1686,681 1686,676.7 1686,673.2 C1681.3,675.3 1681.3,676.4 1681.3,677.9 C1677.4,679.3 1677.4,681.6 1677.4,681.6 C1675.1,681.6 1675.1,679.5 1675.1,677.9 C1671.9,680.6 1671.9,683.9 1671.9,683.9 C1670.4,683.9 1670.4,681.4 1670.4,679.4 C1668,685.7 1668,693.4 1668,693.4 C1664.1,693.4 1664.1,678.2 1664.1,674.7 C1659.4,672.4 1659.4,673.4 1659.4,672.4 C1656.3,678.8 1656.3,686.7 1656.3,686.7 C1653.5,686.7 1653.5,676.2 1653.5,667.7 C1652.4,669.8 1652.4,670.7 1652.4,672.4 C1646.9,674.1 1646.9,677.9 1646.9,677.9 C1642.2,677.9 1642.2,674.7 1642.2,673.9 C1636,673.2 1636,673.5 1636,673.2 C1632.9,676.7 1632.9,681 1632.9,681 C1628.2,681 1628.2,678 1628.2,675.5 C1622.7,676.2 1622.7,677.1 1622.7,677.1 C1618.8,677.1 1618.8,675.8 1618.8,674.7 C1613.3,680.4 1613.3,687.2 1613.3,687.2 C1607.9,687.2 1607.9,679.1 1607.9,672.4 C1602.4,674.1 1602.4,676.3 1602.4,676.3 C1598.5,676.3 1598.5,672.8 1598.5,671.6 C1595.3,670.4 1595.3,670 1595.3,669.3 C1589.9,668.5 1589.9,668 1589.9,666.9 C1584.4,668 1584.4,669.3 1584.4,669.3 C1578.1,669.3 1578.1,668.4 1578.1,667.7 C1575,669.8 1575,671.2 1575,672.4 C1571.9,673.6 1571.9,674.1 1571.9,674.7 C1566.4,675.4 1566.4,676.3 1566.4,676.3 C1563.3,676.3 1563.3,671.6 1563.3,667.7 C1558.6,668 1558.6,668.1 1558.6,668.5 C1553.9,668.9 1553.9,668.7 1553.9,670 C1550,671.3 1550,676.3 1550,676.3 C1545.3,676.3 1545.3,675 1545.3,673.9 C1540.6,675 1540.6,674.5 1540.6,676.3 C1538.3,678.1 1538.3,685 1538.3,685 C1535.2,685 1535.2,679.3 1535.2,674.7 C1532,678.1 1532,680.8 1532,682.2 C1528.9,683.3 1528.9,682.2 1528.9,683.3 C1526.6,685.4 1526.6,694.6 1526.6,694.6 C1522.8,694.6 1522.8,684.5 1522.8,676.3 C1520.5,681.5 1520.5,687.8 1520.5,687.8 C1519.7,687.8 1519.7,680.2 1519.7,673.9 C1517.3,676.1 1517.3,677.6 1517.3,678.6 C1511.9,679.7 1511.9,678.6 1511.9,680.2 C1508.3,684.8 1508.3,706.4 1508.3,706.4 C1504.8,706.4 1504.8,687.3 1504.8,671.6 C1502.5,676.4 1502.5,682.2 1502.5,682.2 C1498.6,682.2 1498.6,678.1 1498.6,674.7 C1493.9,678.6 1493.9,683.3 1493.9,683.3 C1487.6,683.3 1487.6,679.4 1487.6,676.3 C1484.5,680 1484.5,684.4 1484.5,684.4 C1481.4,684.4 1481.4,681.7 1481.4,679.4 C1478.2,683.2 1478.2,687.8 1478.2,687.8 C1475.1,687.8 1475.1,680.6 1475.1,674.7 C1472.3,684.7 1472.3,696.8 1472.3,696.8 C1468.9,696.8 1468.9,682.9 1468.9,671.6 C1466.1,678.9 1466.1,687.8 1466.1,687.8 C1464.2,687.8 1464.2,678.9 1464.2,671.6 C1461.4,674.8 1461.4,678.6 1461.4,678.6 C1457.9,678.6 1457.9,674.8 1457.9,671.6 C1454,672.7 1454,673.9 1454,673.9 C1450.1,673.9 1450.1,673.1 1450.1,672.4 C1447,674.5 1447,675.5 1447,677.1 C1443.1,678.7 1443.1,682 1443.1,682 C1438.4,682 1438.4,680.2 1438.4,679.4 C1435.3,678.6 1435.3,678.1 1435.3,677.1 C1431.7,681.1 1431.7,686.1 1431.7,686.1 C1428.2,686.1 1428.2,679.4 1428.2,673.9 C1425.1,678.4 1425.1,683.9 1425.1,683.9 C1420.4,683.9 1420.4,678 1420.4,673.2 C1414.2,675.6 1414.2,678.6 1414.2,678.6 C1407.9,678.6 1407.9,671.7 1407.9,670 C1401.6,668.5 1401.6,669.2 1401.6,668.5 C1397,669.5 1397,670.8 1397,670.8 C1392.3,670.8 1392.3,670 1392.3,669.3 C1386,670.3 1386,669.6 1386,671.6 C1383.2,673.6 1383.2,681 1383.2,681 C1379.8,681 1379.8,678.4 1379.8,676.3 C1376.9,681.2 1376.9,687.2 1376.9,687.2 C1372.7,687.2 1372.7,676.1 1372.7,666.9 C1365.7,667.6 1365.7,667.4 1365.7,668.5 C1360.2,669.5 1360.2,671.2 1360.2,673.2 C1357.9,675.1 1357.9,680.2 1357.9,680.2 C1353.2,680.2 1353.2,676.3 1353.2,673.2 C1349.3,675.3 1349.3,674.8 1349.3,677.9 C1346.2,680.9 1346.2,691.4 1346.2,691.4 C1343.8,691.4 1343.8,681.8 1343.8,673.9 C1342.2,675.4 1342.2,675.3 1342.2,677.1 C1336.8,678.8 1336.8,680.3 1336.8,684.4 C1334.4,688.6 1334.4,701.9 1334.4,701.9 C1331.3,701.9 1331.3,686.5 1331.3,673.9 C1329.7,675.7 1329.7,676.7 1329.7,677.9 C1326.6,679 1326.6,679.7 1326.6,681 C1321.9,682.3 1321.9,681.9 1321.9,685.6 C1318.5,689.2 1318.5,702.7 1318.5,702.7 C1315.4,702.7 1315.4,682.6 1315.4,666.1 C1312.5,670.4 1312.5,675.5 1312.5,675.5 C1309.4,675.5 1309.4,674.7 1309.4,673.9 C1304.7,674.3 1304.7,674.1 1304.7,674.7 C1300,675.3 1300,677.5 1300,677.5 C1295.3,677.5 1295.3,675.5 1295.3,674.7 C1290.7,673.9 1290.7,673.2 1290.7,672.9 C1284.1,672.5 1284.1,672.6 1284.1,672.4 C1282.1,678.8 1282.1,686.7 1282.1,686.7 C1279.7,686.7 1279.7,676.7 1279.7,668.5 C1276.6,669.2 1276.6,670 1276.6,670 C1271.9,670 1271.9,668.8 1271.9,667.7 C1267.2,668.8 1267.2,669.6 1267.2,670 C1262.5,670 1262.5,670 1262.5,670 C1254.7,669.9 1254.7,669.6 1254.7,669.3 C1250,671 1250,672.5 1250,673.2 C1243.8,673.2 1243.8,673.2 1243.8,673.2 C1239.9,674 1239.9,678.2 1239.9,678.2 C1236.7,678.2 1236.7,677.1 1236.7,676.3 C1233.6,677.3 1233.6,678.6 1233.6,678.6 C1229.7,678.6 1229.7,674.3 1229.7,670.8 C1225,671.2 1225,671.3 1225,671.6 C1225,671.9 1225,672.4 1225,672.4 C1217.3,672.4 1217.3,670.2 1217.3,668.5 C1211.1,669.9 1211.1,671.6 1211.1,671.6 C1206.4,671.6 1206.4,670.4 1206.4,670 C1200.1,669.6 1200.1,669.6 1200.1,669.3 C1195.4,671 1195.4,671.7 1195.4,673.2 C1190.7,674.6 1190.7,676.7 1190.7,677.9 C1185.7,679 1185.7,680.2 1185.7,680.2 C1182.9,680.2 1182.9,672.5 1182.9,666.1 C1179.8,666.5 1179.8,666.5 1179.8,666.9 C1174.3,667.3 1174.3,666.9 1174.3,668.5 C1171.7,670.4 1171.7,678.6 1171.7,678.6 C1168.9,678.6 1168.9,674.1 1168.9,673.2 C1164.2,673.2 1164.2,673.2 1164.2,673.2 C1161.8,673.9 1161.8,677.9 1161.8,677.9 C1157.9,677.9 1157.9,674.7 1157.9,673.9 C1153.2,673.2 1153.2,673.5 1153.2,673.2 C1149.8,674.9 1149.8,677.1 1149.8,677.1 C1145.4,677.1 1145.4,676.2 1145.4,675.5 C1140.7,676.2 1140.7,676.1 1140.7,677.1 C1138.4,678.1 1138.4,681.6 1138.4,681.6 C1136,681.6 1136,674.4 1136,668.5 C1132.9,668.8 1132.9,669.3 1132.9,669.3 C1128.2,669.3 1128.2,669.1 1128.2,668.5 C1124.3,667.8 1124.3,666.8 1124.3,665.4 C1120.4,667.5 1120.4,669.1 1120.4,670 C1117.3,670.8 1117.3,670 1117.3,670.8 C1114.2,671.7 1114.2,675.5 1114.2,675.5 C1111,675.5 1111,673.4 1111,671.6 C1107.9,672.7 1107.9,673.9 1107.9,673.9 C1101.6,673.9 1101.6,673.5 1101.6,673.2 C1097,673.9 1097,674.7 1097,674.7 C1093,674.7 1093,673.9 1093,673.2 C1090.2,677 1090.2,681.6 1090.2,681.6 C1086.8,681.6 1086.8,674.8 1086.8,673.2 C1079.8,671.6 1079.8,672 1079.8,671.6 C1073.5,671.2 1073.5,671.2 1073.5,670.8 C1068.8,671.5 1068.8,672 1068.8,672.4 C1062.6,672.8 1062.6,672.8 1062.6,673.2 C1057.9,673.6 1057.9,674.7 1057.9,674.7 C1052.4,674.7 1052.4,673.9 1052.4,673.2 C1050.1,674.6 1050.1,675.3 1050.1,676.3 C1046.2,677.3 1046.2,679.4 1046.2,679.4 C1041.5,679.4 1041.5,678.1 1041.5,677.1 C1037.6,676 1037.6,674.2 1037.6,673.2 C1031.3,672.1 1031.3,671.9 1031.3,670.8 C1029.7,673.3 1029.7,676.3 1029.7,676.3 C1027.4,676.3 1027.4,671.5 1027.4,670 C1022.7,668.6 1022.7,668.8 1022.7,667.7 C1018.8,668.8 1018.8,669.4 1018.8,670 C1015.7,670.7 1015.7,671.6 1015.7,671.6 C1011,671.6 1011,669.9 1011,668.5 C1007.9,669.9 1007.9,670.2 1007.9,671.6 C1005,673 1005,677.1 1005,677.1 C1002.4,677.1 1002.4,674.1 1002.4,673.2 C1000,672.3 1000,672.3 1000,671.6 C996.9,677.4 996.9,684.4 996.9,684.4 C993.8,684.4 993.8,674.4 993.8,666.1 C993,666.8 993,667.3 993,667.7 C987.5,668.1 987.5,668.5 987.5,668.5 C984.4,668.5 984.4,668 984.4,667.7 C982.1,670.2 982.1,671.9 982.1,673.2 C978.1,674.5 978.1,675.5 978.1,675.5 C971.9,675.5 971.9,675.1 971.9,674.7 C965.6,675.4 965.6,675.9 965.6,676.3 C956.3,676.7 956.3,676.7 956.3,677.1 C950.8,677.5 950.8,677.3 950.8,678.6 C948.4,680 948.4,685 948.4,685 C945.3,685 945.3,677 945.3,674.7 C940.6,672.5 940.6,672.6 940.6,671.6 C937.5,670.6 937.5,671.6 937.5,668.5 C934.4,664.8 934.4,652.5 934.4,649.2 Z" fill="#adbe38" stroke="#f2f5e2" stroke-width="0.9"/><rect x="31" y="626" width="1788" height="1.1" fill="#111"/><rect x="162" y="305" width="14" height="14" fill="#acacac"/><polygon points="162,305 176,305 162,319" fill="#efefef"/><path d="M162,319 L176,305" stroke="#777" stroke-width="1"/><rect x="162.5" y="305.5" width="13" height="13" fill="none" stroke="#999" stroke-width="0.6" stroke-opacity="0.6"/><rect x="852" y="305" width="14" height="14" fill="#acacac"/><polygon points="852,305 866,305 866,319" fill="#efefef"/><path d="M852,305 L866,319" stroke="#777" stroke-width="1"/><rect x="852.5" y="305.5" width="13" height="13" fill="none" stroke="#999" stroke-width="0.6" stroke-opacity="0.6"/><rect x="996" y="305" width="14" height="14" fill="#acacac"/><polygon points="996,305 1010,305 996,319" fill="#efefef"/><path d="M996,319 L1010,305" stroke="#777" stroke-width="1"/><rect x="996.5" y="305.5" width="13" height="13" fill="none" stroke="#999" stroke-width="0.6" stroke-opacity="0.6"/><rect x="1550" y="305" width="14" height="14" fill="#acacac"/><polygon points="1550,305 1564,305 1564,319" fill="#efefef"/><path d="M1550,305 L1564,319" stroke="#777" stroke-width="1"/><rect x="1550.5" y="305.5" width="13" height="13" fill="none" stroke="#999" stroke-width="0.6" stroke-opacity="0.6"/><rect x="31.5" y="535.5" width="14" height="14" fill="#acacac"/><polygon points="31.5,535.5 45.5,535.5 31.5,549.5" fill="#efefef"/><path d="M31.5,549.5 L45.5,535.5" stroke="#777" stroke-width="1"/><rect x="32.0" y="536.0" width="13" height="13" fill="none" stroke="#999" stroke-width="0.6" stroke-opacity="0.6"/><rect x="911.5" y="535.5" width="14" height="14" fill="#acacac"/><polygon points="911.5,535.5 925.5,535.5 925.5,549.5" fill="#efefef"/><path d="M911.5,535.5 L925.5,549.5" stroke="#777" stroke-width="1"/><rect x="912.0" y="536.0" width="13" height="13" fill="none" stroke="#999" stroke-width="0.6" stroke-opacity="0.6"/><rect x="926" y="535.5" width="14" height="14" fill="#acacac"/><polygon points="926,535.5 940,535.5 926,549.5" fill="#efefef"/><path d="M926,549.5 L940,535.5" stroke="#777" stroke-width="1"/><rect x="926.5" y="536.0" width="13" height="13" fill="none" stroke="#999" stroke-width="0.6" stroke-opacity="0.6"/><rect x="1805" y="535.5" width="14" height="14" fill="#acacac"/><polygon points="1805,535.5 1819,535.5 1819,549.5" fill="#efefef"/><path d="M1805,535.5 L1819,549.5" stroke="#777" stroke-width="1"/><rect x="1805.5" y="536.0" width="13" height="13" fill="none" stroke="#999" stroke-width="0.6" stroke-opacity="0.6"/><rect x="162" y="518.5" width="14" height="14" fill="#ff0000"/><rect x="166" y="524.8" width="6.5" height="1.8" fill="#8a8a8a"/><rect x="852" y="518.5" width="14" height="14" fill="#ff0000"/><rect x="856" y="524.8" width="6.5" height="1.8" fill="#8a8a8a"/><rect x="996" y="518.5" width="14" height="14" fill="#ff0000"/><rect x="1000" y="524.8" width="6.5" height="1.8" fill="#8a8a8a"/><rect x="1550" y="518.5" width="14" height="14" fill="#ff0000"/><rect x="1554" y="524.8" width="6.5" height="1.8" fill="#8a8a8a"/><rect x="32" y="749.5" width="14" height="14" fill="#ff0000"/><rect x="36" y="755.8" width="6.5" height="1.8" fill="#8a8a8a"/><rect x="912" y="749.5" width="14" height="14" fill="#ff0000"/><rect x="916" y="755.8" width="6.5" height="1.8" fill="#8a8a8a"/><rect x="926.5" y="749.5" width="14" height="14" fill="#ff0000"/><rect x="930.5" y="755.8" width="6.5" height="1.8" fill="#8a8a8a"/><rect x="1805.5" y="749.5" width="14" height="14" fill="#ff0000"/><rect x="1809.5" y="755.8" width="6.5" height="1.8" fill="#8a8a8a"/><path transform="translate(10.7,315.3) scale(13.1,12.4)" d="M0.35,0 H0.65 L0.92,0.82 H1 V1 H0.64 V0.82 H0.71 L0.685,0.76 H0.315 L0.29,0.82 H0.36 V1 H0 V0.82 H0.08 Z M0.40,0.57 H0.60 L0.5,0.28 Z" fill="#c4ced5" fill-rule="evenodd"/><g transform="translate(9,339.8) scale(1.0)" fill="#eef1f4" stroke="#eef1f4"><path d="M0,4.3 H3.4 L7.4,1.2 V12.8 L3.4,9.7 H0 Z" stroke="none"/><path d="M8.78,5.24 A2.3,2.3 0 0 1 8.78,8.76" fill="none" stroke-width="1.5"/><path d="M9.90,2.84 A4.9,4.9 0 0 1 9.90,11.16" fill="none" stroke-width="1.5"/><path d="M10.63,0.17 A7.6,7.6 0 0 1 10.63,13.83" fill="none" stroke-width="1.5"/></g><rect x="9" y="370.7" width="12.5" height="8.5" rx="1.2" fill="#eef1f4"/><path d="M19.3,371 V367.6 A2.95,2.95 0 0 1 25.2,367.6 V369.8" fill="none" stroke="#eef1f4" stroke-width="2"/><g transform="translate(9.6,545.6) scale(1.03)" fill="#c4ced5"><path d="M4,2.2 L14,0 V11 A2.6,2.1 0 1 1 12.2,9 V4.2 L5.8,5.6 V12.5 A2.6,2.1 0 1 1 4,10.5 Z"/></g><g transform="translate(8.8,570.8) scale(1.0)" fill="#eef1f4" stroke="#eef1f4"><path d="M0,4.3 H3.4 L7.4,1.2 V12.8 L3.4,9.7 H0 Z" stroke="none"/><path d="M8.78,5.24 A2.3,2.3 0 0 1 8.78,8.76" fill="none" stroke-width="1.5"/><path d="M9.90,2.84 A4.9,4.9 0 0 1 9.90,11.16" fill="none" stroke-width="1.5"/><path d="M10.63,0.17 A7.6,7.6 0 0 1 10.63,13.83" fill="none" stroke-width="1.5"/></g><rect x="10.6" y="601.6" width="13.4" height="8.7" rx="1.5" fill="#eef1f4"/><path d="M14.2,602 V599.6 A3.3,3.3 0 0 1 20.8,599.6 V602" fill="none" stroke="#eef1f4" stroke-width="2.4"/><rect x="31" y="781" width="1789" height="2" fill="#333"/><rect x="30.25" y="781" width="2" height="10" fill="#333"/><text x="34.05" y="801" font-family='"Liberation Sans", sans-serif' font-size="10" fill="#555" font-weight="400" text-anchor="start" letter-spacing="0" >00:00</text><rect x="52.48" y="781" width="2" height="5" fill="#333"/><rect x="74.70" y="781" width="2" height="5" fill="#333"/><rect x="96.93" y="781" width="2" height="5" fill="#333"/><rect x="119.15" y="781" width="2" height="5" fill="#333"/><rect x="141.38" y="781" width="2" height="10" fill="#333"/><text x="145.18" y="801" font-family='"Liberation Sans", sans-serif' font-size="10" fill="#555" font-weight="400" text-anchor="start" letter-spacing="0" >00:05</text><rect x="163.60" y="781" width="2" height="5" fill="#333"/><rect x="185.83" y="781" width="2" height="5" fill="#333"/><rect x="208.05" y="781" width="2" height="5" fill="#333"/><rect x="230.28" y="781" width="2" height="5" fill="#333"/><rect x="252.50" y="781" width="2" height="10" fill="#333"/><text x="256.3" y="801" font-family='"Liberation Sans", sans-serif' font-size="10" fill="#555" font-weight="400" text-anchor="start" letter-spacing="0" >00:10</text><rect x="274.73" y="781" width="2" height="5" fill="#333"/><rect x="296.95" y="781" width="2" height="5" fill="#333"/><rect x="319.18" y="781" width="2" height="5" fill="#333"/><rect x="341.40" y="781" width="2" height="5" fill="#333"/><rect x="363.62" y="781" width="2" height="10" fill="#333"/><text x="367.43" y="801" font-family='"Liberation Sans", sans-serif' font-size="10" fill="#555" font-weight="400" text-anchor="start" letter-spacing="0" >00:15</text><rect x="385.85" y="781" width="2" height="5" fill="#333"/><rect x="408.08" y="781" width="2" height="5" fill="#333"/><rect x="430.30" y="781" width="2" height="5" fill="#333"/><rect x="452.53" y="781" width="2" height="5" fill="#333"/><rect x="474.75" y="781" width="2" height="10" fill="#333"/><text x="478.55" y="801" font-family='"Liberation Sans", sans-serif' font-size="10" fill="#555" font-weight="400" text-anchor="start" letter-spacing="0" >00:20</text><rect x="496.98" y="781" width="2" height="5" fill="#333"/><rect x="519.20" y="781" width="2" height="5" fill="#333"/><rect x="541.42" y="781" width="2" height="5" fill="#333"/><rect x="563.65" y="781" width="2" height="5" fill="#333"/><rect x="585.88" y="781" width="2" height="10" fill="#333"/><text x="589.67" y="801" font-family='"Liberation Sans", sans-serif' font-size="10" fill="#555" font-weight="400" text-anchor="start" letter-spacing="0" >00:25</text><rect x="608.10" y="781" width="2" height="5" fill="#333"/><rect x="630.33" y="781" width="2" height="5" fill="#333"/><rect x="652.55" y="781" width="2" height="5" fill="#333"/><rect x="674.78" y="781" width="2" height="5" fill="#333"/><rect x="697.00" y="781" width="2" height="10" fill="#333"/><text x="700.8" y="801" font-family='"Liberation Sans", sans-serif' font-size="10" fill="#555" font-weight="400" text-anchor="start" letter-spacing="0" >00:30</text><rect x="719.23" y="781" width="2" height="5" fill="#333"/><rect x="741.45" y="781" width="2" height="5" fill="#333"/><rect x="763.68" y="781" width="2" height="5" fill="#333"/><rect x="785.90" y="781" width="2" height="5" fill="#333"/><rect x="808.12" y="781" width="2" height="10" fill="#333"/><text x="811.92" y="801" font-family='"Liberation Sans", sans-serif' font-size="10" fill="#555" font-weight="400" text-anchor="start" letter-spacing="0" >00:35</text><rect x="830.35" y="781" width="2" height="5" fill="#333"/><rect x="852.58" y="781" width="2" height="5" fill="#333"/><rect x="874.80" y="781" width="2" height="5" fill="#333"/><rect x="897.03" y="781" width="2" height="5" fill="#333"/><rect x="919.25" y="781" width="2" height="10" fill="#333"/><text x="923.05" y="801" font-family='"Liberation Sans", sans-serif' font-size="10" fill="#555" font-weight="400" text-anchor="start" letter-spacing="0" >00:40</text><rect x="941.48" y="781" width="2" height="5" fill="#333"/><rect x="963.70" y="781" width="2" height="5" fill="#333"/><rect x="985.93" y="781" width="2" height="5" fill="#333"/><rect x="1008.15" y="781" width="2" height="5" fill="#333"/><rect x="1030.38" y="781" width="2" height="10" fill="#333"/><text x="1034.17" y="801" font-family='"Liberation Sans", sans-serif' font-size="10" fill="#555" font-weight="400" text-anchor="start" letter-spacing="0" >00:45</text><rect x="1052.60" y="781" width="2" height="5" fill="#333"/><rect x="1074.83" y="781" width="2" height="5" fill="#333"/><rect x="1097.05" y="781" width="2" height="5" fill="#333"/><rect x="1119.28" y="781" width="2" height="5" fill="#333"/><rect x="1141.50" y="781" width="2" height="10" fill="#333"/><text x="1145.3" y="801" font-family='"Liberation Sans", sans-serif' font-size="10" fill="#555" font-weight="400" text-anchor="start" letter-spacing="0" >00:50</text><rect x="1163.73" y="781" width="2" height="5" fill="#333"/><rect x="1185.95" y="781" width="2" height="5" fill="#333"/><rect x="1208.18" y="781" width="2" height="5" fill="#333"/><rect x="1230.40" y="781" width="2" height="5" fill="#333"/><rect x="1252.62" y="781" width="2" height="10" fill="#333"/><text x="1256.42" y="801" font-family='"Liberation Sans", sans-serif' font-size="10" fill="#555" font-weight="400" text-anchor="start" letter-spacing="0" >00:55</text><rect x="1274.85" y="781" width="2" height="5" fill="#333"/><rect x="1297.08" y="781" width="2" height="5" fill="#333"/><rect x="1319.30" y="781" width="2" height="5" fill="#333"/><rect x="1341.53" y="781" width="2" height="5" fill="#333"/><rect x="1363.75" y="781" width="2" height="10" fill="#333"/><text x="1367.55" y="801" font-family='"Liberation Sans", sans-serif' font-size="10" fill="#555" font-weight="400" text-anchor="start" letter-spacing="0" >01:00</text><rect x="1385.98" y="781" width="2" height="5" fill="#333"/><rect x="1408.20" y="781" width="2" height="5" fill="#333"/><rect x="1430.43" y="781" width="2" height="5" fill="#333"/><rect x="1452.65" y="781" width="2" height="5" fill="#333"/><rect x="1474.88" y="781" width="2" height="10" fill="#333"/><text x="1478.67" y="801" font-family='"Liberation Sans", sans-serif' font-size="10" fill="#555" font-weight="400" text-anchor="start" letter-spacing="0" >01:05</text><rect x="1497.10" y="781" width="2" height="5" fill="#333"/><rect x="1519.33" y="781" width="2" height="5" fill="#333"/><rect x="1541.55" y="781" width="2" height="5" fill="#333"/><rect x="1563.78" y="781" width="2" height="5" fill="#333"/><rect x="1586.00" y="781" width="2" height="10" fill="#333"/><text x="1589.8" y="801" font-family='"Liberation Sans", sans-serif' font-size="10" fill="#555" font-weight="400" text-anchor="start" letter-spacing="0" >01:10</text><rect x="1608.23" y="781" width="2" height="5" fill="#333"/><rect x="1630.45" y="781" width="2" height="5" fill="#333"/><rect x="1652.68" y="781" width="2" height="5" fill="#333"/><rect x="1674.90" y="781" width="2" height="5" fill="#333"/><rect x="1697.12" y="781" width="2" height="10" fill="#333"/><text x="1700.92" y="801" font-family='"Liberation Sans", sans-serif' font-size="10" fill="#555" font-weight="400" text-anchor="start" letter-spacing="0" >01:15</text><rect x="1719.35" y="781" width="2" height="5" fill="#333"/><rect x="1741.58" y="781" width="2" height="5" fill="#333"/><rect x="1763.80" y="781" width="2" height="5" fill="#333"/><rect x="1786.03" y="781" width="2" height="5" fill="#333"/><rect x="1808.25" y="781" width="2" height="10" fill="#333"/><text x="1812.05" y="801" font-family='"Liberation Sans", sans-serif' font-size="10" fill="#555" font-weight="400" text-anchor="start" letter-spacing="0" >01:20</text><rect x="315" y="304" width="2" height="477" fill="#0b7d8a"/><polygon points="315,766 327,773.3 315,781" fill="#0b7d8a"/><rect x="669" y="304" width="2" height="477" fill="#0b7d8a"/><polygon points="671,766 659,773.3 671,781" fill="#0b7d8a"/><rect x="713" y="304" width="5" height="501" fill="rgba(255,255,255,0.62)"/><rect x="714" y="304" width="3" height="501" fill="#f05454"/><rect x="0" y="807" width="1820" height="18" fill="#f1f1f1"/><polygon points="11.3,812 11.3,819.3 7,815.6" fill="#a3a3a3"/><polygon points="1810,812 1810,819.3 1814.3,815.6" fill="#a3a3a3"/><rect x="0" y="304" width="1" height="521" fill="#e6eaee"/></svg></div><div class="clips-panel" style="position:absolute;left:1820px;top:92px;width:99px;height:733px;overflow:hidden"><svg width="99" height="733" viewBox="1820 92 99 733"><rect x="1820" y="92" width="99" height="733" fill="#e9edf0"/><defs><linearGradient id="shL" x1="0" y1="0" x2="1" y2="0"><stop offset="0" stop-color="#c4ccd2"/><stop offset="1" stop-color="#e9edf0" stop-opacity="0"/></linearGradient></defs><rect x="1820" y="92" width="11" height="733" fill="url(#shL)"/><rect x="1831" y="94.5" width="64" height="67" rx="6" fill="#fff" stroke="#dde2e6" stroke-width="1"/><path transform="translate(1863.3,115.7) rotate(-45)" d="M5.5,6.4 L-5.85,6.4 A6.4,6.4 0 0 1 -5.85,-6.4 L9.15,-6.4 A4.2,4.2 0 0 1 9.15,2.0 L-4.25,2.0 A2,2 0 0 1 -4.25,-2.0 L5.0,-2.0" fill="none" stroke="#607480" stroke-width="2.45"/><text x="1862.5" y="149.5" font-family='"Liberation Sans", sans-serif' font-size="16" fill="#607480" font-weight="400" text-anchor="middle" letter-spacing="0" >Clips</text></svg></div><div class="toolbar" style="position:absolute;left:0px;top:40px;width:1919px;height:52px;overflow:hidden"><svg width="1919" height="52" viewBox="0 40 1919 52"><rect x="0" y="40" width="1919" height="50" fill="#dce3ea"/><rect x="0" y="90" width="1919" height="2" fill="#cecccb"/><rect x="1917.6" y="40" width="1.4" height="52" fill="#c9c9c9"/><path d="M30,45 H60.2 V85 H30 A20,20 0 0 1 30,45 Z" fill="#cfd7de"/><path d="M62,45 H92 A20,20 0 0 1 92,85 H62 Z" fill="#4b5c69"/><path transform="translate(30,57.5) scale(15,15.6)" d="M0.35,0 H0.65 L0.92,0.82 H1 V1 H0.64 V0.82 H0.71 L0.685,0.76 H0.315 L0.29,0.82 H0.36 V1 H0 V0.82 H0.08 Z M0.40,0.57 H0.60 L0.5,0.28 Z" fill="#4b5c69" fill-rule="evenodd"/><rect x="77.9" y="61.9" width="2.7" height="7.1" fill="#fff"/><rect x="81.2" y="56.9" width="2.9" height="17.1" fill="#fff"/><rect x="84.8" y="61" width="2.8" height="9" fill="#fff"/><rect x="88.4" y="58.7" width="2.9" height="13.5" fill="#fff"/><rect x="92.2" y="62.8" width="2.8" height="6" fill="#fff"/><rect x="122" y="40" width="1.6" height="50" fill="#c9cacb"/><rect x="229.5" y="40" width="1.6" height="50" fill="#c9cacb"/><rect x="291.5" y="40" width="1.6" height="50" fill="#c9cacb"/><rect x="385.5" y="40" width="1.6" height="50" fill="#c9cacb"/><rect x="1614.5" y="40" width="1.6" height="50" fill="#c9cacb"/><rect x="1768" y="40" width="1.6" height="50" fill="#c9cacb"/><path d="M147.6,62.6 A7.4,7.4 0 1 1 149.1,69.8" fill="none" stroke="#4b5c69" stroke-width="2.2"/><polyline points="146.1,56.4 146.1,63 152.8,63" fill="none" stroke="#4b5c69" stroke-width="2"/><path d="M205.4,62.6 A7.4,7.4 0 1 0 203.9,69.8" fill="none" stroke="#a9adb1" stroke-width="2.2"/><polyline points="206.9,56.4 206.9,63 200.2,63" fill="none" stroke="#a9adb1" stroke-width="2"/><path d="M254.5,57.8 H265 L267.5,60.3 V71 H254.5 Z" fill="none" stroke="#4b5c69" stroke-width="1.8" stroke-linejoin="round"/><rect x="257.3" y="58" width="6" height="3.8" fill="none" stroke="#4b5c69" stroke-width="1.5"/><circle cx="261" cy="66.6" r="1.9" fill="none" stroke="#4b5c69" stroke-width="1.5"/><text x="307" y="65" font-family='"Liberation Sans", sans-serif' font-size="14" fill="#4b5c69" font-weight="400" text-anchor="start" letter-spacing="0" >Crossfade</text><rect x="305" y="71" width="20" height="6" fill="#cfd7de"/><rect x="329" y="71" width="20" height="6" fill="#4b5c69"/><rect x="353" y="71" width="20" height="6" fill="#cfd7de"/><text x="1599.5" y="70" font-family='"Liberation Sans", sans-serif' font-size="14" fill="#4b5c69" text-anchor="end">Head: <tspan font-weight="700">00:00:30</tspan></text><text x="1752" y="70" font-family='"Liberation Sans", sans-serif' font-size="14" fill="#4b5c69" text-anchor="end">Selection: <tspan font-weight="700">00:00:16</tspan></text><text x="1900" y="70" font-family='"Liberation Sans", sans-serif' font-size="14" fill="#4b5c69" text-anchor="end">Duration: <tspan font-weight="700">00:01:20</tspan></text></svg></div><div class="header" style="position:absolute;left:0px;top:0px;width:1919px;height:40px;overflow:hidden"><svg width="1919" height="40" viewBox="0 0 1919 40"><rect x="0" y="0" width="1919" height="40" fill="#971038"/><rect x="0" y="0" width="98" height="40" fill="#3f505e"/><text transform="translate(13.9,28) scale(0.9,1)" x="0" y="0" font-family='"Liberation Sans", sans-serif' font-size="23.2" font-weight="700" fill="#fff" stroke="#fff" stroke-width="0.35">D</text><text transform="translate(26.8,28) scale(0.97,1)" x="0" y="0" font-family='"Liberation Sans", sans-serif' font-size="23.2" font-weight="700" fill="#fff" stroke="#fff" stroke-width="0.35">A</text><text transform="translate(41.4,28) scale(0.78,1)" x="0" y="0" font-family='"Liberation Sans", sans-serif' font-size="23.2" font-weight="700" fill="#fff" stroke="#fff" stroke-width="0.35">V</text><text transform="translate(57.3,28) scale(0.94,1)" x="0" y="0" font-family='"Liberation Sans", sans-serif' font-size="23.2" font-weight="700" fill="#fff" stroke="#fff" stroke-width="0.35">D</text><rect x="53.7" y="13.9" width="3.5" height="14.1" fill="#fff"/><rect x="53.7" y="10.1" width="3.5" height="3.5" fill="#e8141c"/><polyline points="78,16.5 84.25,23.0 90.5,16.5" fill="none" stroke="#6b7f8e" stroke-width="2.2"/><rect x="112.1" y="16.2" width="1.3" height="8.8" fill="#fff"/><rect x="114.1" y="12.1" width="1.3" height="16.700000000000003" fill="#fff"/><rect x="116.1" y="11.1" width="1.3" height="18.700000000000003" fill="#fff"/><rect x="118.0" y="12.9" width="1.3" height="14.9" fill="#fff"/><rect x="113.4" y="13" width="0.7" height="15" fill="#f0b8c8" opacity="0.6"/><rect x="115.4" y="12" width="0.7" height="17" fill="#f0b8c8" opacity="0.6"/><polygon points="124.8,11.1 130.3,11.1 124.7,20.2 130.3,29.2 124.8,29.2 119.3,20.2" fill="#fff"/><text transform="translate(143.5,26.8) scale(0.885,1)" x="0" y="0" font-family='"Liberation Sans", sans-serif' font-size="20.3" fill="#fff" stroke="#fff" stroke-width="0.2">CAE</text><text x="204" y="25" font-family='"Liberation Sans", sans-serif' font-size="14" fill="#fff" font-weight="700" text-anchor="start" letter-spacing="-0.35" >File</text><polyline points="234,17.5 239.0,23.0 244,17.5" fill="none" stroke="#fff" stroke-width="2"/><text x="268" y="25" font-family='"Liberation Sans", sans-serif' font-size="14" fill="#fff" font-weight="700" text-anchor="start" letter-spacing="-0.35" >Edit</text><polyline points="300,17.5 305.0,23.0 310,17.5" fill="none" stroke="#fff" stroke-width="2"/><text x="334.5" y="25" font-family='"Liberation Sans", sans-serif' font-size="14" fill="#fff" font-weight="700" text-anchor="start" letter-spacing="-0.35" >Audio</text><polyline points="379,17.5 384.0,23.0 389,17.5" fill="none" stroke="#fff" stroke-width="2"/><text x="413.5" y="25" font-family='"Liberation Sans", sans-serif' font-size="14" fill="#fff" font-weight="700" text-anchor="start" letter-spacing="-0.35" >View</text><polyline points="452,17.5 457.0,23.0 462,17.5" fill="none" stroke="#fff" stroke-width="2"/><circle cx="1784.2" cy="19.9" r="7" fill="#fff"/><text x="1784.2" y="24" font-family='"Liberation Sans", sans-serif' font-size="10.5" fill="#971038" font-weight="700" text-anchor="middle" letter-spacing="0" >?</text><circle cx="1821.6" cy="16" r="3.7" fill="#fff"/><path d="M1815.2,27 C1815.2,22.5 1817.5,20.8 1821.6,20.8 C1825.7,20.8 1828,22.5 1828,27 Z" fill="#fff"/><text x="1837.5" y="24.9" font-family='"Liberation Sans", sans-serif' font-size="13" fill="#fff" font-weight="700" text-anchor="start" letter-spacing="-0.2" >CAE-USER</text></svg></div><div class="transport" style="position:absolute;left:0px;top:825px;width:1919px;height:84px;overflow:hidden"><svg width="1919" height="84" viewBox="0 825 1919 84"><rect x="0" y="825" width="1919" height="84" fill="#36444f"/><rect x="512" y="860" width="21" height="21" rx="2.5" fill="none" stroke="#a9b9c4" stroke-width="1.5" stroke-dasharray="4.2,1.8" stroke-dashoffset="2"/><g fill="none" stroke="#a9b9c4" stroke-width="1.3"><circle cx="519" cy="866.4" r="2.2"/><circle cx="519" cy="873.7" r="2.2"/><path d="M520.7,868.1 L529.1,875.9 M520.7,872 L529.1,864.2"/></g><path d="M552.8,860 H558.3 V881 H552.8 M582,860 H576.6 V881 H582" fill="none" stroke="#a9b9c4" stroke-width="1.5" stroke-dasharray="4,1.8" stroke-dashoffset="1"/><g fill="none" stroke="#a9b9c4" stroke-width="1.3"><circle cx="563.7" cy="866.4" r="2.2"/><circle cx="563.7" cy="873.7" r="2.2"/><path d="M565.4000000000001,868.1 L573.8000000000001,875.9 M565.4000000000001,872 L573.8000000000001,864.2"/></g><rect x="601.95" y="861.65" width="7.6" height="16.4" fill="none" stroke="#a9b9c4" stroke-width="1.5"/><rect x="614.3" y="861.65" width="8.95" height="16.4" fill="none" stroke="#a9b9c4" stroke-width="1.5"/><rect x="613.5" y="857.5" width="1.7" height="25.3" fill="#a9b9c4"/><path d="M655.9,860.7 H664.3 A9.3,9.3 0 0 1 664.3,879.3 H655.9 V874.2 H664.3 A4.2,4.2 0 0 0 664.3,865.8 H655.9 Z" fill="none" stroke="#a9b9c4" stroke-width="1.4"/><rect x="655.5" y="860" width="6" height="6.2" fill="#a9b9c4"/><rect x="655.5" y="873.8" width="6" height="6.3" fill="#a9b9c4"/><polygon points="642.2,870.2 650.8,865.3 650.8,868.4 655.5,868.4 655.5,872.6 648.4,872.6 649.6,869.4" fill="#a9b9c4"/><circle cx="813" cy="871" r="24.2" fill="none" stroke="#aebbc5" stroke-width="2"/><circle cx="873" cy="871" r="24.2" fill="none" stroke="#aebbc5" stroke-width="2"/><circle cx="933" cy="871" r="24.2" fill="none" stroke="#aebbc5" stroke-width="2"/><circle cx="993" cy="871" r="24.2" fill="none" stroke="#aebbc5" stroke-width="2"/><circle cx="813" cy="871" r="9.1" fill="#d40f0f"/><path d="M865.5,863 Q865.5,861 867.3,862 L880,869.6 Q881.6,870.6 880,871.6 L867.3,879.6 Q865.5,880.6 865.5,878.6 Z" fill="#86d11a"/><polyline points="894.5,851 898.5,846.5 902.5,851" fill="none" stroke="#a9b9c4" stroke-width="1.4"/><rect x="932.2" y="861" width="1.8" height="18.3" fill="#d01830"/><path d="M920.7,869.6 H929.5 M926,866 L929.6,869.6 L926,873.2 M944,869.6 H936.6 M940,866 L936.5,869.6 L940,873.2" fill="none" stroke="#a9b9c4" stroke-width="1.3"/><rect x="981.5" y="861" width="2" height="18.3" fill="#a9b9c4"/><path d="M995,861.9 L984.9,870.1 L995,878.3 Z M1003,861.9 L995.9,870.1 L1003,878.3 Z" fill="none" stroke="#a9b9c4" stroke-width="1.6" stroke-linejoin="miter"/><rect x="1051" y="859" width="3" height="20" fill="rgb(45, 88, 9)"/><rect x="1057" y="859" width="3" height="20" fill="rgb(45, 88, 9)"/><rect x="1063" y="859" width="3" height="20" fill="rgb(45, 88, 9)"/><rect x="1069" y="859" width="3" height="20" fill="rgb(45, 88, 9)"/><rect x="1075" y="859" width="3" height="20" fill="rgb(45, 88, 9)"/><rect x="1081" y="859" width="3" height="20" fill="rgb(45, 88, 9)"/><rect x="1087" y="859" width="3" height="20" fill="rgb(45, 88, 9)"/><rect x="1093" y="859" width="3" height="20" fill="rgb(45, 88, 9)"/><rect x="1099" y="859" width="3" height="20" fill="rgb(45, 88, 9)"/><rect x="1105" y="859" width="3" height="20" fill="rgb(45, 88, 9)"/><rect x="1111" y="859" width="3" height="20" fill="rgb(45, 88, 9)"/><rect x="1117" y="859" width="3" height="20" fill="rgb(45, 88, 9)"/><rect x="1123" y="859" width="3" height="20" fill="rgb(45, 88, 9)"/><rect x="1129" y="859" width="3" height="20" fill="rgb(45, 88, 9)"/><rect x="1135" y="859" width="3" height="20" fill="rgb(45, 88, 9)"/><rect x="1141" y="859" width="3" height="20" fill="rgb(45, 88, 9)"/><rect x="1147" y="859" width="3" height="20" fill="rgb(46, 88, 10)"/><rect x="1153" y="859" width="3" height="20" fill="rgb(46, 89, 10)"/><rect x="1159" y="859" width="3" height="20" fill="rgb(46, 89, 10)"/><rect x="1165" y="859" width="3" height="20" fill="rgb(46, 89, 10)"/><rect x="1171" y="859" width="3" height="20" fill="rgb(46, 89, 10)"/><rect x="1177" y="859" width="3" height="20" fill="rgb(46, 89, 10)"/><rect x="1183" y="859" width="3" height="20" fill="rgb(46, 89, 10)"/><rect x="1189" y="859" width="3" height="20" fill="rgb(46, 89, 10)"/><rect x="1195" y="859" width="3" height="20" fill="rgb(46, 89, 10)"/><rect x="1201" y="859" width="3" height="20" fill="rgb(46, 89, 10)"/><rect x="1207" y="859" width="3" height="20" fill="rgb(46, 89, 10)"/><rect x="1213" y="859" width="3" height="20" fill="rgb(46, 89, 10)"/><rect x="1219" y="859" width="3" height="20" fill="rgb(46, 89, 10)"/><rect x="1225" y="859" width="3" height="20" fill="rgb(46, 89, 10)"/><rect x="1231" y="859" width="3" height="20" fill="rgb(46, 89, 10)"/><rect x="1237" y="859" width="3" height="20" fill="rgb(46, 89, 10)"/><rect x="1243" y="859" width="3" height="20" fill="rgb(46, 89, 10)"/><rect x="1249" y="859" width="3" height="20" fill="rgb(57, 94, 16)"/><rect x="1255" y="859" width="3" height="20" fill="rgb(68, 99, 22)"/><rect x="1261" y="859" width="3" height="20" fill="rgb(79, 104, 28)"/><rect x="1267" y="859" width="3" height="20" fill="rgb(90, 109, 34)"/><rect x="1273" y="859" width="3" height="20" fill="rgb(95, 111, 37)"/><rect x="1279" y="859" width="3" height="20" fill="rgb(100, 112, 41)"/><rect x="1285" y="859" width="3" height="20" fill="rgb(105, 114, 44)"/><rect x="1291" y="859" width="3" height="20" fill="rgb(111, 115, 48)"/><rect x="1297" y="859" width="3" height="20" fill="rgb(116, 117, 51)"/><rect x="1303" y="859" width="3" height="20" fill="rgb(121, 118, 55)"/><rect x="1309" y="859" width="3" height="20" fill="rgb(126, 120, 58)"/><rect x="1315" y="859" width="3" height="20" fill="rgb(128, 112, 58)"/><rect x="1321" y="859" width="3" height="20" fill="rgb(128, 90, 48)"/><rect x="1327" y="859" width="3" height="20" fill="rgb(122, 74, 37)"/><rect x="1333" y="859" width="3" height="20" fill="rgb(122, 48, 32)"/><rect x="1339" y="859" width="3" height="20" fill="rgb(112, 24, 24)"/><rect x="1345" y="859" width="3" height="20" fill="rgb(106, 5, 5)"/><text x="1048.5" y="855.2" font-family='"Liberation Sans", sans-serif' font-size="12" fill="#a9b9c4" font-weight="400" text-anchor="start" letter-spacing="0" >-60</text><text x="1114" y="855.2" font-family='"Liberation Sans", sans-serif' font-size="12" fill="#a9b9c4" font-weight="400" text-anchor="start" letter-spacing="0" >-30</text><text x="1188.8" y="855.2" font-family='"Liberation Sans", sans-serif' font-size="12" fill="#a9b9c4" font-weight="400" text-anchor="start" letter-spacing="0" >-12</text><text x="1237.8" y="855.2" font-family='"Liberation Sans", sans-serif' font-size="12" fill="#a9b9c4" font-weight="400" text-anchor="start" letter-spacing="0" >-6</text><text x="1281" y="855.2" font-family='"Liberation Sans", sans-serif' font-size="12" fill="#a9b9c4" font-weight="400" text-anchor="start" letter-spacing="0" >-3</text><text x="1340.3" y="855.2" font-family='"Liberation Sans", sans-serif' font-size="12" fill="#a9b9c4" font-weight="400" text-anchor="start" letter-spacing="0" >0</text><rect x="1050" y="890" width="300" height="5" rx="2.5" fill="#fff"/><rect x="1050" y="890" width="239" height="5" rx="2.5" fill="#9caeb8"/><circle cx="1288.7" cy="892.7" r="5.7" fill="#9caeb8" stroke="#fff" stroke-width="1.2"/><g transform="translate(1367,862.4) scale(1.27)" fill="#a9b9c4" stroke="#a9b9c4"><path d="M0,4.3 H3.4 L7.4,1.2 V12.8 L3.4,9.7 H0 Z" stroke="none"/><path d="M8.78,5.24 A2.3,2.3 0 0 1 8.78,8.76" fill="none" stroke-width="1.5"/><path d="M9.90,2.84 A4.9,4.9 0 0 1 9.90,11.16" fill="none" stroke-width="1.5"/><path d="M10.63,0.17 A7.6,7.6 0 0 1 10.63,13.83" fill="none" stroke-width="1.5"/></g></svg></div></div>
</body></html>
